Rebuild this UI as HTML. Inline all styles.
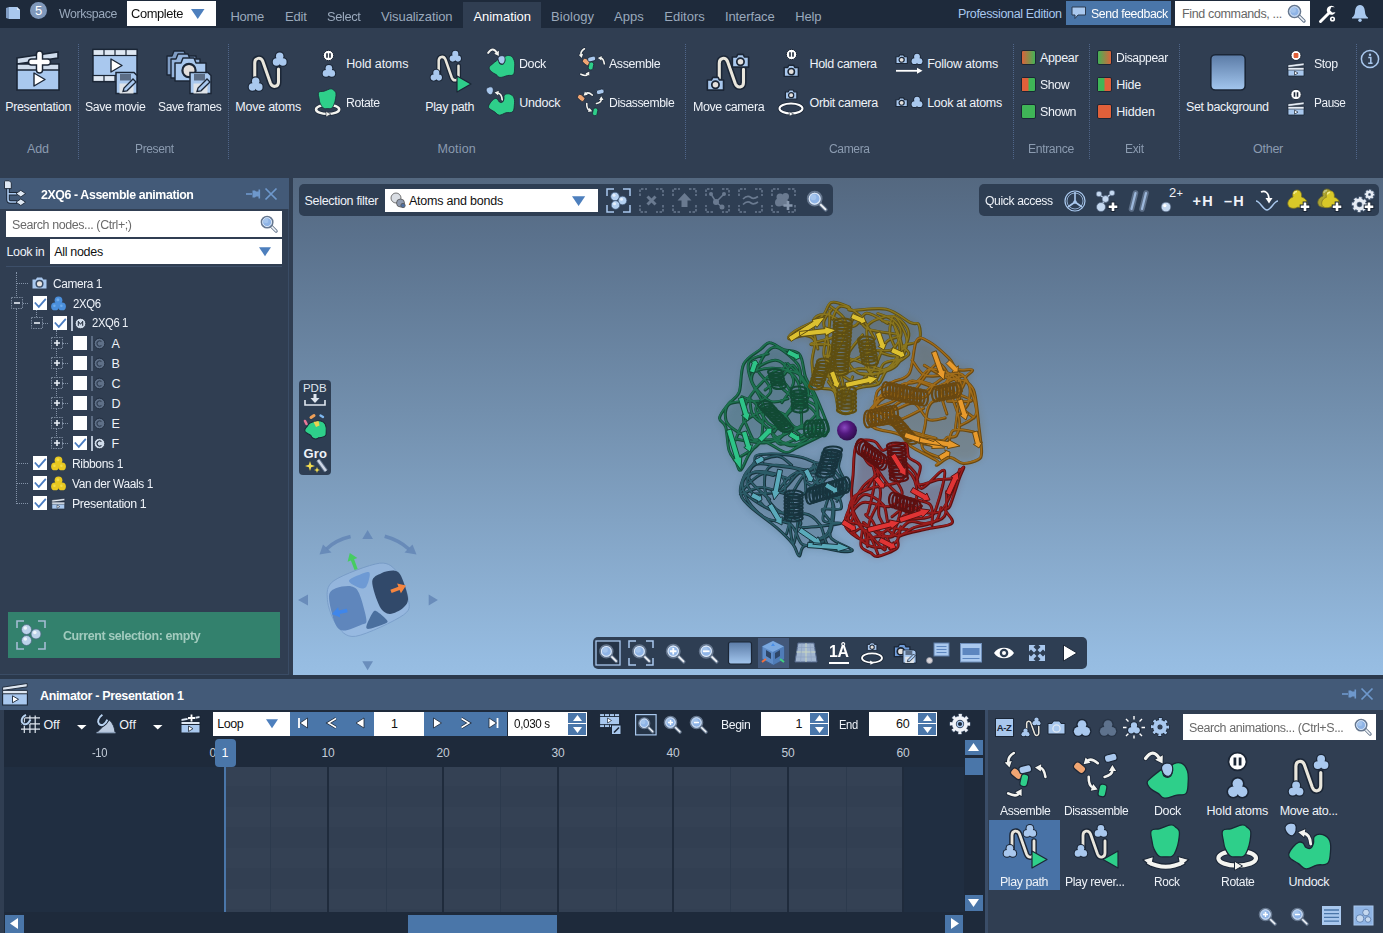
<!DOCTYPE html>
<html lang="en">
<head>
<meta charset="utf-8">
<title>2XQ6 - Assemble animation</title>
<style>
*{box-sizing:border-box;margin:0;padding:0}
html,body{width:1383px;height:933px;overflow:hidden;background:#303e52}
body{position:relative;font-family:"Liberation Sans",sans-serif;font-size:12.5px;color:#eef2f8}
.a{position:absolute}
.t{position:absolute;white-space:nowrap;line-height:16px;height:16px}
svg{position:absolute;overflow:visible}
</style>
</head>
<body>
<svg width="0" height="0" style="position:absolute"><defs>
 <linearGradient id="bgg" x1="0" y1="0" x2="0" y2="1"><stop offset="0" stop-color="#5b7ba6"/><stop offset="1" stop-color="#a3c6ee"/></linearGradient>
 <linearGradient id="og" x1="0" y1="0" x2="1" y2="0"><stop offset="0" stop-color="#e0603a"/><stop offset="1" stop-color="#3fb557"/></linearGradient>
 <linearGradient id="go" x1="0" y1="0" x2="1" y2="0"><stop offset="0" stop-color="#3fb557"/><stop offset="1" stop-color="#e0603a"/></linearGradient>
 <g id="mag"><path d="M11.5 11.5 L17 17" stroke="#66778e" stroke-width="3.4" stroke-linecap="round"/><path d="M12 12 L16.8 16.8" stroke="#f2f5f9" stroke-width="1.6" stroke-linecap="round"/><circle cx="7.5" cy="7.5" r="6" fill="#8fb4e6" stroke="#66778e" stroke-width="1.6"/><circle cx="7.5" cy="7.5" r="4.7" fill="none" stroke="#dfe9f6" stroke-width="1"/><circle cx="6.3" cy="6.2" r="2.6" fill="#a9c8ee" opacity=".8"/></g>
 <path id="tri" d="M0 0 H13.5 L6.75 10 Z" fill="#4d7fbd"/>
 <!-- trefoil atoms, 12x12 -->
 <g id="at"><g fill="#1b2636"><circle cx="6" cy="3.700" r="3.800"/><circle cx="3.500" cy="8.200" r="3.800"/><circle cx="8.500" cy="8.200" r="3.800"/></g><g fill="#a9c8ee"><circle cx="6" cy="3.700" r="2.900"/><circle cx="3.500" cy="8.200" r="2.900"/><circle cx="8.500" cy="8.200" r="2.900"/><circle cx="6" cy="6.800" r="2.600"/></g></g>
 <!-- camera 14x11 -->
 <g id="cam"><path d="M1 3 H4 L5 1 H9 L10 3 H13 V10.5 H1 Z" fill="#a9c8ee" stroke="#1b2636" stroke-width="1.2" stroke-linejoin="round"/><circle cx="7" cy="6.5" r="2.7" fill="#e4e0dc" stroke="#1b2636" stroke-width="1.3"/></g>
 <!-- N path 24x30 -->
 <g id="np" fill="none" stroke-linecap="round" stroke-linejoin="round"><path d="M3 20 V6.500 C3 1.500 8.500 0.500 10.500 5 L17.500 25 C19.500 30 25 28.500 25 24 V12" stroke="#1b2636" stroke-width="5.600"/><path d="M3 20 V6.500 C3 1.500 8.500 0.500 10.500 5 L17.500 25 C19.500 30 25 28.500 25 24 V12" stroke="#e9e6dc" stroke-width="2.800"/></g>
 <!-- pause badge 11x11 -->
 <g id="pz"><circle cx="5.5" cy="5.5" r="5.2" fill="#fff" stroke="#1b2636" stroke-width="1"/><path d="M4 3.2 V7.8 M7 3.2 V7.8" stroke="#1b2636" stroke-width="1.6"/></g>
 <!-- green blob (dock) 27x23 -->
 <path id="blob" d="M4 7 C6 3 10 2 13 2 C17 0 23 1 25 5 C27 9 26 13 26 17 C25 21 21 20 17 21 C13 24 9 21 8 18 C5 16 0 15 1 12 C1 9 3 9 4 7 Z" fill="#2ecf8a" stroke="#1b2636" stroke-width="1.2"/>
 <!-- rotate body 20x22 -->
 <path id="tooth" d="M3 4 C6 3 8 2 10 1 C12 0 14 2 17 3 C19 4 18 8 17.5 12 C17 17 15 20 11 21 C6 21 4 17 3.5 13 C3 9 1 5 3 4 Z" fill="#2ecf8a" stroke="#1b2636" stroke-width="1.2"/>
 <!-- small clapper 18x14 -->
 <g id="clap"><path d="M1 5 H17 V13.5 H1 Z" fill="#a9c8ee" stroke="#1b2636" stroke-width=".8"/><path d="M1 2.400 L17 0.400 V3 L1 5 Z" fill="#e6edf6" stroke="#1b2636" stroke-width=".6"/><path d="M1 5 H17 V7.600 H1 Z" fill="#e6edf6" stroke="#1b2636" stroke-width=".6"/><path d="M7.500 8.600 V12.600 L11 10.600 Z" fill="#fff" stroke="#1b2636" stroke-width=".7"/></g>
 <!-- curved arrow small (white) 10x8 pointing right-down -->
 <g id="carr"><path d="M1 6 C2 2 6 1 9 4" fill="none" stroke="#1b2636" stroke-width="3"/><path d="M1 6 C2 2 6 1 9 4" fill="none" stroke="#fff" stroke-width="1.5"/><path d="M10.5 6.5 L6.6 5.6 L9.8 2.2 Z" fill="#fff" stroke="#1b2636" stroke-width=".6"/></g>
</defs></svg>
<svg width="0" height="0" style="position:absolute"><defs><g id="i_asm"><path d="M1013.8 753.0Q1007.2 757.0 1008.5 762.8" fill="none" stroke="#1b2636" stroke-width="4.2" stroke-linecap="round"/><path d="M1009.5 767.5L1004.7 762.4L1011.7 760.9Z" fill="#1b2636" stroke="#1b2636" stroke-width="1.6" stroke-linejoin="round"/><path d="M1013.8 753.0Q1007.2 757.0 1008.5 762.8" fill="none" stroke="#f4f4f0" stroke-width="2.6" stroke-linecap="round"/><path d="M1009.5 767.5L1004.7 762.4L1011.7 760.9Z" fill="#f4f4f0"/><path d="M1045.4 776.9Q1044.0 768.0 1039.8 767.8" fill="none" stroke="#1b2636" stroke-width="4.2" stroke-linecap="round"/><path d="M1035.0 767.6L1041.2 764.3L1040.8 771.5Z" fill="#1b2636" stroke="#1b2636" stroke-width="1.6" stroke-linejoin="round"/><path d="M1045.4 776.9Q1044.0 768.0 1039.8 767.8" fill="none" stroke="#f4f4f0" stroke-width="2.6" stroke-linecap="round"/><path d="M1035.0 767.6L1041.2 764.3L1040.8 771.5Z" fill="#f4f4f0"/><path d="M1008.2 793.4Q1016.5 797.5 1019.1 793.1" fill="none" stroke="#1b2636" stroke-width="4.2" stroke-linecap="round"/><path d="M1021.6 789.0L1021.6 796.0L1015.4 792.3Z" fill="#1b2636" stroke="#1b2636" stroke-width="1.6" stroke-linejoin="round"/><path d="M1008.2 793.4Q1016.5 797.5 1019.1 793.1" fill="none" stroke="#f4f4f0" stroke-width="2.6" stroke-linecap="round"/><path d="M1021.6 789.0L1021.6 796.0L1015.4 792.3Z" fill="#f4f4f0"/><rect x="1010.4" y="769.8" width="12.5" height="8" rx="3.3" transform="rotate(40 1016.6 773.8)" fill="#f0a572" stroke="#1b2636" stroke-width="1.200"/><rect x="1019.0" y="765.5" width="12.5" height="7.5" rx="3.1" transform="rotate(-15 1025.2 769.3)" fill="#a9c8ee" stroke="#1b2636" stroke-width="1.200"/><rect x="1020.5" y="774.1" width="7.5" height="12.5" rx="3.1" transform="rotate(12 1024.2 780.4)" fill="#2ecf8a" stroke="#1b2636" stroke-width="1.200"/></g><g id="i_dasm"><path d="M1097.8 763.2Q1091.0 757.5 1087.2 761.0" fill="none" stroke="#1b2636" stroke-width="4.2" stroke-linecap="round"/><path d="M1083.6 764.2L1085.6 757.5L1090.5 762.8Z" fill="#1b2636" stroke="#1b2636" stroke-width="1.6" stroke-linejoin="round"/><path d="M1097.8 763.2Q1091.0 757.5 1087.2 761.0" fill="none" stroke="#f4f4f0" stroke-width="2.6" stroke-linecap="round"/><path d="M1083.6 764.2L1085.6 757.5L1090.5 762.8Z" fill="#f4f4f0"/><path d="M1104.6 776.9Q1112.5 775.0 1112.4 769.8" fill="none" stroke="#1b2636" stroke-width="4.2" stroke-linecap="round"/><path d="M1112.4 765.0L1116.1 771.0L1108.9 771.0Z" fill="#1b2636" stroke="#1b2636" stroke-width="1.6" stroke-linejoin="round"/><path d="M1104.6 776.9Q1112.5 775.0 1112.4 769.8" fill="none" stroke="#f4f4f0" stroke-width="2.6" stroke-linecap="round"/><path d="M1112.4 765.0L1116.1 771.0L1108.9 771.0Z" fill="#f4f4f0"/><path d="M1088.7 776.9Q1088.5 786.0 1093.1 787.7" fill="none" stroke="#1b2636" stroke-width="4.2" stroke-linecap="round"/><path d="M1097.6 789.4L1090.7 790.7L1093.2 783.9Z" fill="#1b2636" stroke="#1b2636" stroke-width="1.6" stroke-linejoin="round"/><path d="M1088.7 776.9Q1088.5 786.0 1093.1 787.7" fill="none" stroke="#f4f4f0" stroke-width="2.6" stroke-linecap="round"/><path d="M1097.6 789.4L1090.7 790.7L1093.2 783.9Z" fill="#f4f4f0"/><rect x="1073.3" y="763.8" width="12.5" height="8" rx="3.3" transform="rotate(40 1079.6 767.8)" fill="#f0a572" stroke="#1b2636" stroke-width="1.200"/><rect x="1104.5" y="754.1" width="12.5" height="7.5" rx="3.1" transform="rotate(-15 1110.7 757.9)" fill="#a9c8ee" stroke="#1b2636" stroke-width="1.200"/><rect x="1098.7" y="784.2" width="7.5" height="12.5" rx="3.1" transform="rotate(12 1102.4 790.5)" fill="#2ecf8a" stroke="#1b2636" stroke-width="1.200"/></g><g id="i_dock"><path d="M1147.2 782.2C1147.6 779.6 1150.7 778.1 1153.0 776.0C1155.3 773.9 1156.7 772.8 1158.5 771.6C1160.3 770.4 1160.9 769.1 1162.0 770.0C1163.1 770.9 1162.4 774.7 1164.0 776.0C1165.6 777.3 1168.3 777.5 1170.0 776.5C1171.7 775.5 1172.1 773.4 1172.5 771.0C1172.9 768.6 1170.4 766.3 1172.2 764.7C1174.0 763.1 1178.3 762.0 1181.3 763.2C1184.3 764.4 1186.0 766.8 1187.4 770.8C1188.8 774.8 1188.4 778.4 1188.1 783.0C1187.8 787.6 1188.2 791.2 1185.9 793.6C1183.6 796.0 1181.1 794.2 1176.8 795.1C1172.5 796.0 1168.3 798.4 1164.6 798.1C1160.9 797.8 1161.2 795.4 1158.5 793.6C1155.8 791.8 1153.3 791.3 1151.0 789.0C1148.7 786.7 1146.8 784.8 1147.2 782.2Z" fill="#2ecf8a" stroke="#1b2636" stroke-width="1.3" stroke-linejoin="round"/><path d="M1162.0 766.0C1162.8 764.6 1164.1 763.5 1166.0 763.2C1167.9 762.9 1170.2 762.9 1171.5 764.5C1172.8 766.1 1172.9 768.7 1172.5 771.0C1172.1 773.3 1171.1 775.2 1169.5 776.0C1167.9 776.8 1166.0 776.2 1164.5 775.0C1163.0 773.8 1162.3 771.8 1161.8 770.0C1161.3 768.2 1161.2 767.4 1162.0 766.0Z" fill="#a9c8ee" stroke="#1b2636" stroke-width="1.2" stroke-linejoin="round"/><path d="M1145.5 758.5Q1153.0 747.5 1159.7 758.8" fill="none" stroke="#1b2636" stroke-width="4.800000000000001" stroke-linecap="round"/><path d="M1162.6 763.6L1155.2 759.8L1162.8 755.3Z" fill="#1b2636" stroke="#1b2636" stroke-width="1.6" stroke-linejoin="round"/><path d="M1145.5 758.5Q1153.0 747.5 1159.7 758.8" fill="none" stroke="#f4f4f0" stroke-width="3.2" stroke-linecap="round"/><path d="M1162.6 763.6L1155.2 759.8L1162.8 755.3Z" fill="#f4f4f0"/></g><g id="i_undock"><path d="M1288.7 854.4C1289.1 852.0 1291.0 849.4 1293.0 847.0C1295.0 844.6 1296.5 843.1 1298.5 842.3C1300.5 841.5 1301.5 842.0 1303.0 843.0C1304.5 844.0 1304.5 846.5 1306.1 847.5C1307.7 848.5 1309.5 848.9 1311.0 848.0C1312.5 847.1 1312.8 845.4 1313.5 843.0C1314.2 840.6 1312.6 837.9 1314.5 836.2C1316.4 834.5 1319.8 833.8 1322.8 834.7C1325.8 835.6 1328.2 837.2 1329.7 840.8C1331.2 844.4 1330.9 848.3 1330.4 852.9C1329.9 857.5 1330.1 861.2 1327.4 863.6C1324.7 866.0 1321.1 864.0 1316.8 865.1C1312.5 866.2 1309.8 869.2 1306.1 868.9C1302.4 868.6 1301.5 865.6 1298.5 863.6C1295.5 861.6 1293.0 860.8 1291.0 859.0C1289.0 857.2 1288.3 856.8 1288.7 854.4Z" fill="#2ecf8a" stroke="#1b2636" stroke-width="1.3" stroke-linejoin="round"/><path d="M1285.5 826.0C1286.4 824.6 1288.0 823.5 1290.0 823.2C1292.0 822.9 1294.1 822.9 1295.3 824.5C1296.5 826.1 1296.5 828.8 1296.0 831.0C1295.5 833.2 1294.5 834.8 1293.0 835.5C1291.5 836.2 1290.0 835.6 1288.5 834.5C1287.0 833.4 1285.9 831.7 1285.3 830.0C1284.7 828.3 1284.6 827.4 1285.5 826.0Z" fill="#a9c8ee" stroke="#1b2636" stroke-width="1.2" stroke-linejoin="round"/><path d="M1310.7 844.0Q1310.0 834.0 1303.4 833.0" fill="none" stroke="#1b2636" stroke-width="4.4" stroke-linecap="round"/><path d="M1298.3 832.2L1305.3 829.2L1304.1 837.1Z" fill="#1b2636" stroke="#1b2636" stroke-width="1.6" stroke-linejoin="round"/><path d="M1310.7 844.0Q1310.0 834.0 1303.4 833.0" fill="none" stroke="#f4f4f0" stroke-width="2.8" stroke-linecap="round"/><path d="M1298.3 832.2L1305.3 829.2L1304.1 837.1Z" fill="#f4f4f0"/></g><g id="i_rock"><path d="M1147 861.5 Q1165.7 871.5 1184.5 861.5" fill="none" stroke="#1b2636" stroke-width="6"/><path d="M1142.8 859.8 L1153.5 856.5 L1151.5 867 Z M1188.800 859.5 L1178 856.5 L1180 867 Z" fill="#f4f4f0" stroke="#1b2636" stroke-width="1.200" stroke-linejoin="round"/><path d="M1148 862 Q1165.700 871.5 1183.5 862" fill="none" stroke="#f4f4f0" stroke-width="4.200"/><path d="M1151.3 830.6C1152.9 828.1 1156.1 829.8 1160.0 828.6C1163.9 827.4 1167.8 825.0 1171.0 824.8C1174.2 824.6 1174.3 826.2 1176.0 827.5C1177.7 828.8 1178.8 828.8 1179.3 831.5C1179.8 834.2 1179.2 837.5 1178.6 841.0C1178.0 844.5 1177.7 846.0 1176.5 849.0C1175.3 852.0 1174.7 854.4 1172.5 856.0C1170.3 857.6 1168.4 856.8 1165.7 856.8C1163.0 856.8 1161.1 857.6 1158.8 856.0C1156.5 854.4 1155.4 852.0 1154.0 849.0C1152.6 846.0 1152.5 844.7 1152.0 841.0C1151.5 837.3 1149.7 833.1 1151.3 830.6Z" fill="#2ecf8a" stroke="#1b2636" stroke-width="1.3" stroke-linejoin="round"/></g><g id="i_rot"><ellipse cx="1237.200" cy="858.200" rx="18.800" ry="7.400" fill="none" stroke="#1b2636" stroke-width="6.200"/><ellipse cx="1237.200" cy="858.200" rx="18.800" ry="7.400" fill="none" stroke="#f4f4f0" stroke-width="4.200"/><path d="M1234.500 861.200 L1242.500 866 L1234.500 870.500 Z" fill="#f4f4f0" stroke="#1b2636" stroke-width="1"/><path d="M1222.7 830.6C1224.3 828.1 1227.5 829.8 1231.4 828.6C1235.3 827.4 1239.2 825.0 1242.4 824.8C1245.6 824.6 1245.7 826.2 1247.4 827.5C1249.1 828.8 1250.2 828.8 1250.7 831.5C1251.2 834.2 1250.6 837.5 1250.0 841.0C1249.4 844.5 1249.1 846.0 1247.9 849.0C1246.7 852.0 1246.1 854.4 1243.9 856.0C1241.7 857.6 1239.8 856.8 1237.1 856.8C1234.4 856.8 1232.5 857.6 1230.2 856.0C1227.9 854.4 1226.8 852.0 1225.4 849.0C1224.0 846.0 1223.9 844.7 1223.4 841.0C1222.9 837.3 1221.1 833.1 1222.7 830.6Z" fill="#2ecf8a" stroke="#1b2636" stroke-width="1.3" stroke-linejoin="round"/></g></defs></svg>
<!-- TOP BAR -->
<div class="a" style="left:0px;top:0px;width:1383px;height:28px;background:#1e2a3b"></div>
<svg style="left:5px;top:6px" width="16" height="14" viewBox="0 0 16 14"><path d="M1 2 L4 1 L4 13 L1 12 Z" fill="#7f9cc4"/><path d="M4 1 L12 1 L15 4 L15 13 L4 13 Z" fill="#a9c8ee"/><path d="M12 1 L12 4 L15 4 Z" fill="#dbe8f8"/></svg>
<div class="a" style="left:30px;top:2px;width:17px;height:17px;background:#7f98bb;border-radius:50%"></div>
<div class="t" style="left:30px;width:17px;text-align:center;top:2.5px;font-size:13px;color:#fff">5</div>
<div class="t" style="left:59px;letter-spacing:-0.40px;transform:scaleX(0.948);transform-origin:0 0;top:5.8px;font-size:13px;color:#9aa9bc">Workspace</div>
<div class="a" style="left:127px;top:1px;width:89px;height:25px;background:#fff"></div>
<div class="t" style="left:131px;letter-spacing:-0.40px;transform:scaleX(0.992);transform-origin:0 0;top:5.7px;font-size:13px;color:#111">Complete</div>
<svg style="left:191px;top:9px" width="14" height="10" viewBox="0 0 14 10"><use href="#tri"/></svg>
<div class="t" style="left:230.5px;letter-spacing:-0.29px;top:8.5px;font-size:13px;color:#9aa9bc">Home</div>
<div class="t" style="left:285px;letter-spacing:-0.20px;top:8.5px;font-size:13px;color:#9aa9bc">Edit</div>
<div class="t" style="left:327px;letter-spacing:-0.40px;transform:scaleX(0.990);transform-origin:0 0;top:8.5px;font-size:13px;color:#9aa9bc">Select</div>
<div class="t" style="left:381px;letter-spacing:-0.10px;top:8.5px;font-size:13px;color:#9aa9bc">Visualization</div>
<div class="a" style="left:463px;top:2px;width:78px;height:26px;background:#303e52"></div>
<div class="t" style="left:473.4px;letter-spacing:-0.02px;top:8.5px;font-size:13px;color:#fff">Animation</div>
<div class="t" style="left:551px;letter-spacing:0.05px;top:8.5px;font-size:13px;color:#9aa9bc">Biology</div>
<div class="t" style="left:614px;top:8.5px;font-size:13px;color:#9aa9bc">Apps</div>
<div class="t" style="left:664.3px;top:8.5px;font-size:13px;color:#9aa9bc">Editors</div>
<div class="t" style="left:725px;letter-spacing:-0.12px;top:8.5px;font-size:13px;color:#9aa9bc">Interface</div>
<div class="t" style="left:795.3px;letter-spacing:-0.16px;top:8.5px;font-size:13px;color:#9aa9bc">Help</div>
<div class="t" style="left:958px;letter-spacing:-0.34px;top:5.8px;color:#a9c8ee">Professional Edition</div>
<div class="a" style="left:1066px;top:1px;width:105px;height:24px;background:#4a76a9"></div>
<svg style="left:1071px;top:6px" width="16" height="14" viewBox="0 0 16 14"><path d="M1 1 H14.5 V9 H7 L4 12.5 V9 H1 Z" fill="#a9c8ee" stroke="#2b3b50" stroke-width="1"/></svg>
<div class="t" style="left:1090.5px;letter-spacing:-0.40px;transform:scaleX(0.983);transform-origin:0 0;top:5.8px;color:#fff">Send feedback</div>
<div class="a" style="left:1175px;top:1px;width:135px;height:25px;background:#fff"></div>
<div class="t" style="left:1182px;letter-spacing:-0.35px;top:5.8px;color:#666">Find commands, ...</div>
<svg style="left:1287px;top:4px" width="20" height="20" viewBox="0 0 20 20"><use href="#mag"/></svg>
<svg style="left:1318px;top:4px" width="20" height="20" viewBox="0 0 20 20"><path d="M2.5 17.5 L10.5 9.5" stroke="#fff" stroke-width="3" stroke-linecap="round"/><path d="M16.8 3.2 A4.6 4.6 0 1 0 17.5 8.2 L14.2 8.6 L12 6.2 L13.4 3 Z" fill="#fff"/><circle cx="14.5" cy="15" r="2.6" fill="#fff"/><circle cx="14.5" cy="15" r="1" fill="#1e2a3b"/></svg>
<svg style="left:1351px;top:4px" width="18" height="19" viewBox="0 0 18 19"><path d="M9 1 C5 1 4.2 5 4 8 C3.8 11 2.5 12.5 1 13.5 V14.5 H17 V13.5 C15.5 12.5 14.2 11 14 8 C13.8 5 13 1 9 1 Z" fill="#a9c8ee"/><circle cx="9" cy="16.3" r="1.7" fill="#a9c8ee"/></svg>
<!-- RIBBON -->
<div class="a" style="left:0px;top:28px;width:1383px;height:150px;background:#303e52"></div>
<div class="a" style="left:78px;top:44px;width:0;height:115px;border-left:1px dotted #50668a"></div>
<div class="a" style="left:228px;top:44px;width:0;height:115px;border-left:1px dotted #50668a"></div>
<div class="a" style="left:685px;top:44px;width:0;height:115px;border-left:1px dotted #50668a"></div>
<div class="a" style="left:1013px;top:44px;width:0;height:115px;border-left:1px dotted #50668a"></div>
<div class="a" style="left:1089px;top:44px;width:0;height:115px;border-left:1px dotted #50668a"></div>
<div class="a" style="left:1179px;top:44px;width:0;height:115px;border-left:1px dotted #50668a"></div>
<div class="a" style="left:1356px;top:44px;width:0;height:115px;border-left:1px dotted #50668a"></div>
<svg style="left:15px;top:50px" width="46" height="42" viewBox="0 0 46 42"><path d="M2 19 H44 V40 H2 Z" fill="#a9c8ee" stroke="#1b2636" stroke-width="1.6"/>
<path d="M2 8 L43 2 V8 L2 14 Z" fill="#cfdcec" stroke="#1b2636" stroke-width="1.6"/>
<path d="M2 14 H44 V20 H2 Z" fill="#cfdcec" stroke="#1b2636" stroke-width="1.6"/>
<path d="M19 23 V36 L30 29.5 Z" fill="#fff" stroke="#1b2636" stroke-width="1.4" stroke-linejoin="round"/>
<path d="M24.5 4 V20 M16.500 12 H32.500" stroke="#1b2636" stroke-width="7.5" stroke-linecap="round"/>
<path d="M24.5 4 V20 M16.500 12 H32.500" stroke="#fff" stroke-width="4.6" stroke-linecap="round"/></svg>
<div class="t" style="left:5.2px;letter-spacing:-0.35px;top:99px;color:#eef2f8">Presentation</div>
<div class="t" style="left:26.9px;letter-spacing:-0.05px;top:140.6px;color:#8b9bb0">Add</div>
<svg style="left:92px;top:48px" width="47" height="46" viewBox="0 0 47 46"><rect x="1" y="1.5" width="44" height="32" fill="#a9c8ee" stroke="#1b2636" stroke-width="1.5"/>
<rect x="1" y="1.5" width="44" height="6" fill="#dfe8f3" stroke="#1b2636" stroke-width="1.2"/><rect x="1" y="27.5" width="44" height="6" fill="#dfe8f3" stroke="#1b2636" stroke-width="1.2"/>
<path d="M12 1.5 V7.5 M23 1.5 V7.5 M34 1.5 V7.5 M12 27.5 V33.5 M23 27.5 V33.5" stroke="#1b2636" stroke-width="1.2"/>
<path d="M19 11 V24 L30 17.5 Z" fill="#fff" stroke="#1b2636" stroke-width="1.4" stroke-linejoin="round"/>
<g transform="translate(24,24.5)"><g id="flop"><path d="M0 0 H18 L21 3 V21 H0 Z" fill="#a9c8ee" stroke="#1b2636" stroke-width="1.5"/><rect x="4" y="1.5" width="11" height="6.5" fill="#5c6d85"/><rect x="3.5" y="11" width="14" height="10" fill="#dfe3e8"/><path d="M7 19 L8 15.5 L17 6.5 L20 9.5 L11 18.3 Z" fill="#a9c8ee" stroke="#1b2636" stroke-width="1.3"/></g></g></svg>
<div class="t" style="left:85px;letter-spacing:-0.40px;transform:scaleX(0.985);transform-origin:0 0;top:99px;color:#eef2f8">Save movie</div>
<svg style="left:166px;top:48px" width="47" height="46" viewBox="0 0 47 46"><g fill="#7f9cc4" stroke="#1b2636" stroke-width="1.4" stroke-linejoin="round"><path d="M1 8 H6 L8 3 H18 L20 8 H30 V27 H1 Z"/><path d="M5 11 H10 L12 6 H22 L24 11 H34 V30 H5 Z" fill="#94b2da"/></g>
<path d="M9 15 H15 L17 10 H28 L30 15 H40 V33 H9 Z" fill="#a9c8ee" stroke="#1b2636" stroke-width="1.5" stroke-linejoin="round"/>
<circle cx="23" cy="22.5" r="6.6" fill="#e4dfdc" stroke="#1b2636" stroke-width="2.2"/>
<g transform="translate(24,24.5)"><use href="#flop"/></g></svg>
<div class="t" style="left:158px;letter-spacing:-0.40px;transform:scaleX(0.963);transform-origin:0 0;top:99px;color:#eef2f8">Save frames</div>
<div class="t" style="left:134.5px;letter-spacing:-0.40px;transform:scaleX(0.961);transform-origin:0 0;top:140.6px;color:#8b9bb0">Present</div>
<svg style="left:246px;top:50px" width="44" height="42" viewBox="0 0 44 42"><g transform="translate(5.500,6) scale(1.08)"><use href="#np"/></g><g transform="translate(26,1.500) scale(1.28)"><use href="#at"/></g><g transform="translate(2,26.500) scale(1.28)"><use href="#at"/></g></svg>
<div class="t" style="left:235.3px;letter-spacing:-0.24px;top:99.4px;color:#eef2f8">Move atoms</div>
<svg style="left:323px;top:49.5px" width="11" height="11" viewBox="0 0 11 11"><use href="#pz"/></svg>
<svg style="left:321.5px;top:63.5px" width="14" height="14" viewBox="0 0 14 14"><g transform="scale(1.15)"><use href="#at"/></g></svg>
<div class="t" style="left:346.2px;letter-spacing:-0.11px;top:56px;color:#eef2f8">Hold atoms</div>
<svg style="left:0;top:0" width="1383" height="933" viewBox="0 0 1383 933"><g transform="translate(314.90,88.60) scale(0.615) translate(-1216.5,-824.4)"><use href="#i_rot"/></g></svg>
<div class="t" style="left:346.2px;letter-spacing:-0.40px;transform:scaleX(0.982);transform-origin:0 0;top:95px;color:#eef2f8">Rotate</div>
<svg style="left:430px;top:50px" width="42" height="43" viewBox="0 0 42 43"><g transform="translate(6,5) scale(.9)"><use href="#np"/></g><g transform="translate(19,0) scale(1.05)"><use href="#at"/></g><g transform="translate(0,19) scale(1.05)"><use href="#at"/></g><path d="M27 26 V42 L41 34 Z" fill="#2ecf8a" stroke="#1b2636" stroke-width="1.2" stroke-linejoin="round"/></svg>
<div class="t" style="left:425.2px;letter-spacing:-0.37px;top:99.4px;color:#eef2f8">Play path</div>
<div class="t" style="left:437.4px;letter-spacing:0.18px;top:140.7px;color:#8b9bb0">Motion</div>
<svg style="left:0;top:0" width="1383" height="933" viewBox="0 0 1383 933"><g transform="translate(487.30,48.20) scale(0.62) translate(-1144.1,-751)"><use href="#i_dock"/></g></svg>
<div class="t" style="left:519.2px;letter-spacing:-0.40px;transform:scaleX(0.997);transform-origin:0 0;top:56px;color:#eef2f8">Dock</div>
<svg style="left:0;top:0" width="1383" height="933" viewBox="0 0 1383 933"><g transform="translate(486.00,86.70) scale(0.617) translate(-1284.5,-822.8)"><use href="#i_undock"/></g></svg>
<div class="t" style="left:519.2px;letter-spacing:-0.23px;top:95px;color:#eef2f8">Undock</div>
<svg style="left:0;top:0" width="1383" height="933" viewBox="0 0 1383 933"><g transform="translate(579.00,48.00) scale(0.63) translate(-1005.2,-751.8)"><use href="#i_asm"/></g></svg>
<div class="t" style="left:609px;letter-spacing:-0.40px;transform:scaleX(0.991);transform-origin:0 0;top:56px;color:#eef2f8">Assemble</div>
<svg style="left:0;top:0" width="1383" height="933" viewBox="0 0 1383 933"><g transform="translate(577.00,88.60) scale(0.613) translate(-1072.8,-752.6)"><use href="#i_dasm"/></g></svg>
<div class="t" style="left:609px;letter-spacing:-0.40px;transform:scaleX(0.972);transform-origin:0 0;top:95px;color:#eef2f8">Disassemble</div>
<svg style="left:706px;top:52px" width="45" height="40" viewBox="0 0 45 40"><g transform="translate(10,4) scale(1.1)"><use href="#np"/></g><g transform="translate(25,1) scale(1.35)"><use href="#cam"/></g><g transform="translate(0,24) scale(1.35)"><use href="#cam"/></g></svg>
<div class="t" style="left:692.6px;letter-spacing:-0.40px;transform:scaleX(0.998);transform-origin:0 0;top:99px;color:#eef2f8">Move camera</div>
<svg style="left:785.7px;top:49px" width="11" height="11" viewBox="0 0 11 11"><use href="#pz"/></svg>
<svg style="left:783px;top:64px" width="17" height="13" viewBox="0 0 17 13"><g transform="scale(1.18)"><use href="#cam"/></g></svg>
<div class="t" style="left:809.6px;letter-spacing:-0.35px;top:56px;color:#eef2f8">Hold camera</div>
<svg style="left:778px;top:89px" width="27" height="27" viewBox="0 0 27 27"><g transform="translate(6.5,0) scale(.95)"><use href="#cam"/></g><ellipse cx="13" cy="19.5" rx="11.5" ry="5" fill="none" stroke="#1b2636" stroke-width="3.6"/><ellipse cx="13" cy="19.5" rx="11.5" ry="5" fill="none" stroke="#fff" stroke-width="2"/><path d="M11 22.500 L15.500 25 L11.500 27.200 Z" fill="#fff" stroke="#1b2636" stroke-width=".6"/></svg>
<div class="t" style="left:809.6px;letter-spacing:-0.34px;top:95px;color:#eef2f8">Orbit camera</div>
<svg style="left:895px;top:54px" width="28" height="20" viewBox="0 0 28 20"><g transform="scale(.95,.9)"><use href="#cam"/></g><g transform="translate(16,-1) scale(1)"><use href="#at"/></g><path d="M1 16.800 H24" stroke="#fff" stroke-width="1.8"/><path d="M22 13.800 L27.500 16.800 L22 19.800 Z" fill="#fff"/></svg>
<div class="t" style="left:927.2px;letter-spacing:-0.24px;top:56px;color:#eef2f8">Follow atoms</div>
<svg style="left:895px;top:97px" width="28" height="12" viewBox="0 0 28 12"><g transform="scale(.95,.9)"><use href="#cam"/></g><g transform="translate(16,-1)"><use href="#at"/></g></svg>
<div class="t" style="left:927.2px;letter-spacing:-0.29px;top:95px;color:#eef2f8">Look at atoms</div>
<div class="t" style="left:829.4px;letter-spacing:-0.40px;transform:scaleX(0.965);transform-origin:0 0;top:141px;color:#8b9bb0">Camera</div>
<svg style="left:1020.5px;top:50px" width="15" height="15" viewBox="0 0 15 15"><rect x=".5" y=".5" width="14" height="14" rx="1.5" fill="url(#og)" stroke="#1b2636" stroke-width="1"/></svg>
<div class="t" style="left:1040px;letter-spacing:-0.35px;top:50px;color:#eef2f8">Appear</div>
<svg style="left:1020.5px;top:77px" width="15" height="15" viewBox="0 0 15 15"><rect x=".5" y=".5" width="14" height="14" rx="1.5" fill="#3fb557" stroke="#1b2636" stroke-width="1"/><path d="M1 1 H7.5 V14 H1 Z" fill="#e0603a"/></svg>
<div class="t" style="left:1040px;letter-spacing:-0.40px;transform:scaleX(0.984);transform-origin:0 0;top:76.7px;color:#eef2f8">Show</div>
<svg style="left:1020.5px;top:104px" width="15" height="15" viewBox="0 0 15 15"><rect x=".5" y=".5" width="14" height="14" rx="1.5" fill="#3fb557" stroke="#1b2636" stroke-width="1"/></svg>
<div class="t" style="left:1040px;letter-spacing:-0.40px;transform:scaleX(0.994);transform-origin:0 0;top:104px;color:#eef2f8">Shown</div>
<div class="t" style="left:1028.2px;letter-spacing:-0.40px;transform:scaleX(0.978);transform-origin:0 0;top:140.6px;color:#8b9bb0">Entrance</div>
<svg style="left:1096.5px;top:50px" width="15" height="15" viewBox="0 0 15 15"><rect x=".5" y=".5" width="14" height="14" rx="1.5" fill="url(#go)" stroke="#1b2636" stroke-width="1"/></svg>
<div class="t" style="left:1116.2px;letter-spacing:-0.40px;transform:scaleX(0.971);transform-origin:0 0;top:50px;color:#eef2f8">Disappear</div>
<svg style="left:1096.5px;top:77px" width="15" height="15" viewBox="0 0 15 15"><rect x=".5" y=".5" width="14" height="14" rx="1.5" fill="#e0603a" stroke="#1b2636" stroke-width="1"/><path d="M1 1 H7.5 V14 H1 Z" fill="#3fb557"/></svg>
<div class="t" style="left:1116.2px;letter-spacing:-0.23px;top:76.7px;color:#eef2f8">Hide</div>
<svg style="left:1096.5px;top:104px" width="15" height="15" viewBox="0 0 15 15"><rect x=".5" y=".5" width="14" height="14" rx="1.5" fill="#e0603a" stroke="#1b2636" stroke-width="1"/></svg>
<div class="t" style="left:1116.2px;letter-spacing:-0.17px;top:104px;color:#eef2f8">Hidden</div>
<div class="t" style="left:1125.2px;letter-spacing:-0.40px;transform:scaleX(0.967);transform-origin:0 0;top:140.6px;color:#8b9bb0">Exit</div>
<svg style="left:1210px;top:53.5px" width="36" height="37" viewBox="0 0 36 37"><rect x=".8" y=".8" width="34.4" height="35.2" rx="4.5" fill="url(#bgg)" stroke="#1b2636" stroke-width="1.6"/></svg>
<div class="t" style="left:1186px;letter-spacing:-0.35px;top:98.6px;color:#eef2f8">Set background</div>
<svg style="left:1287px;top:50px" width="18" height="27" viewBox="0 0 18 27"><circle cx="9" cy="5.500" r="5" fill="#fff" stroke="#1b2636" stroke-width="1"/><rect x="6.600" y="3.100" width="4.800" height="4.800" rx=".8" fill="#e0603a"/><g transform="translate(0,12.500)"><use href="#clap"/></g></svg>
<div class="t" style="left:1313.8px;letter-spacing:-0.40px;transform:scaleX(0.987);transform-origin:0 0;top:55.7px;color:#eef2f8">Stop</div>
<svg style="left:1287px;top:89px" width="18" height="27" viewBox="0 0 18 27"><g transform="translate(3.500,0)"><use href="#pz"/></g><g transform="translate(0,12.500)"><use href="#clap"/></g></svg>
<div class="t" style="left:1313.8px;letter-spacing:-0.40px;transform:scaleX(0.942);transform-origin:0 0;top:94.8px;color:#eef2f8">Pause</div>
<div class="t" style="left:1253px;letter-spacing:-0.25px;top:140.6px;color:#8b9bb0">Other</div>
<svg style="left:1360px;top:49px" width="20" height="20" viewBox="0 0 20 20"><circle cx="10" cy="10" r="8.600" fill="none" stroke="#a9c8ee" stroke-width="1.500"/><circle cx="10" cy="5.800" r="1.200" fill="#a9c8ee"/><path d="M8.300 8.600 H10.800 V14 M8.200 14.200 H12.600" stroke="#a9c8ee" stroke-width="1.500" fill="none"/></svg>
<!-- LEFT PANEL -->
<div class="a" style="left:0px;top:178px;width:289px;height:497px;background:#303e52;border-right:1px solid #3a4c65;border-bottom:1px solid #3a4c65"></div>
<div class="a" style="left:0px;top:178px;width:289px;height:31px;background:#435a78"></div>
<svg style="left:4px;top:180px" width="22" height="26" viewBox="0 0 22 26"><path d="M4 8 V19.500 Q4 22 6.500 22 H13 M4 13.800 H13" fill="none" stroke="#1b2636" stroke-width="3.400"/><path d="M4 8 V19.500 Q4 22 6.500 22 H13 M4 13.800 H13" fill="none" stroke="#a9c8ee" stroke-width="1.600"/><path d="M0.500 1.800 Q0.500 0.800 1.500 0.800 H5.300 L7.300 2.800 V8.600 H0.500 Z" fill="#dfe8f3" stroke="#1b2636" stroke-width=".9"/><path d="M12 13.600 L16.800 10.300 L21.600 13.600 L16.800 16.900 Z M12 22.200 L16.800 18.900 L21.600 22.200 L16.800 25.500 Z" fill="#dfe8f3" stroke="#1b2636" stroke-width=".9"/></svg>
<div class="t" style="left:40.5px;letter-spacing:-0.40px;transform:scaleX(0.989);transform-origin:0 0;top:186.8px;color:#fff;font-weight:bold">2XQ6 - Assemble animation</div>
<svg style="left:246px;top:188px" width="32" height="12" viewBox="0 0 32 12"><g id="pinx" stroke="#6e98cc" fill="none"><path d="M0 6 H6" stroke-width="1.6"/><path d="M6.500 2.500 H9 L10 3.500 H13.500 V8.500 H10 L9 9.500 H6.500 Z" fill="#6e98cc" stroke="none"/><path d="M13.300 1.500 V10.500" stroke-width="1.600"/><path d="M19.500 0.500 L30.500 11.500 M30.500 0.500 L19.500 11.500" stroke-width="1.700"/></g></svg>
<div class="a" style="left:6px;top:211px;width:276px;height:26px;background:#fff"></div>
<div class="t" style="left:12.2px;letter-spacing:-0.40px;transform:scaleX(0.997);transform-origin:0 0;top:217.1px;color:#6a6a6a">Search nodes... (Ctrl+;)</div>
<svg style="left:260px;top:215px" width="19" height="19" viewBox="0 0 20 20"><use href="#mag"/></svg>
<div class="t" style="left:6.4px;letter-spacing:-0.33px;top:243.8px;color:#eef2f8">Look in</div>
<div class="a" style="left:50px;top:239px;width:232px;height:25px;background:#fff"></div>
<div class="t" style="left:54.2px;letter-spacing:-0.31px;top:243.8px;color:#111">All nodes</div>
<svg style="left:258.5px;top:247px" width="12" height="9.5" viewBox="0 0 13.5 10"><use href="#tri"/></svg>
<div class="a" style="left:6px;top:266px;width:276px;height:1px;background:#3d4f69"></div>
<div class="a" style="left:16px;top:272px;width:0;height:232px;border-left:1px dotted #8493a8"></div>
<div class="a" style="left:16px;top:283px;width:12px;height:0;border-top:1px dotted #8493a8"></div>
<div class="a" style="left:16px;top:463px;width:12px;height:0;border-top:1px dotted #8493a8"></div>
<div class="a" style="left:16px;top:483px;width:12px;height:0;border-top:1px dotted #8493a8"></div>
<div class="a" style="left:16px;top:503px;width:12px;height:0;border-top:1px dotted #8493a8"></div>
<div class="a" style="left:22px;top:303px;width:6px;height:0;border-top:1px dotted #8493a8"></div>
<div class="a" style="left:36px;top:310px;width:0;height:13px;border-left:1px dotted #8493a8"></div>
<div class="a" style="left:42px;top:323px;width:6px;height:0;border-top:1px dotted #8493a8"></div>
<div class="a" style="left:56px;top:330px;width:0;height:114px;border-left:1px dotted #8493a8"></div>
<svg style="left:32px;top:277px" width="15" height="11.5" viewBox="0 0 15 11.5"><path d="M0.500 2.500 H3.800 L5 0.500 H10 L11.200 2.500 H14.500 V11.500 H0.500 Z" fill="#a9c8ee"/><circle cx="7.500" cy="6.800" r="3.300" fill="#e8e4e0" stroke="#3a4c65" stroke-width="1.500"/></svg>
<div class="t" style="left:53.3px;letter-spacing:-0.40px;transform:scaleX(0.950);transform-origin:0 0;top:275.8px;color:#eef2f8">Camera 1</div>
<svg style="left:10.5px;top:297px" width="12" height="12" viewBox="0 0 12 12"><rect x=".5" y=".5" width="11" height="11" fill="#303e52" stroke="#7a899d" stroke-width="1" stroke-dasharray="1.500 1"/><path d="M3 6 H9" stroke="#e8eef6" stroke-width="1.600"/></svg>
<svg style="left:33px;top:296px" width="14" height="14" viewBox="0 0 14 14"><rect width="14" height="14" fill="#fff"/><path d="M1.800 6.500 L5.800 10.800 L12.800 2.800" fill="none" stroke="#4a7cc0" stroke-width="1.800"/></svg>
<svg style="left:51px;top:296px" width="15" height="15" viewBox="0 0 12 12"><g id="atb"><g fill="#4a8fdc"><circle cx="6" cy="3.400" r="3.100"/><circle cx="3.200" cy="8.300" r="3.100"/><circle cx="8.800" cy="8.300" r="3.100"/><circle cx="6" cy="6.600" r="2.400"/></g><g fill="#7fb8f0" opacity=".7"><circle cx="5.500" cy="2.900" r="1.200"/><circle cx="2.700" cy="7.800" r="1"/><circle cx="8.300" cy="7.800" r="1"/></g></g></svg>
<div class="t" style="left:72.5px;letter-spacing:-0.40px;transform:scaleX(0.912);transform-origin:0 0;top:295.6px;color:#eef2f8">2XQ6</div>
<svg style="left:30.5px;top:317px" width="12" height="12" viewBox="0 0 12 12"><rect x=".5" y=".5" width="11" height="11" fill="#303e52" stroke="#7a899d" stroke-width="1" stroke-dasharray="1.500 1"/><path d="M3 6 H9" stroke="#e8eef6" stroke-width="1.600"/></svg>
<svg style="left:53px;top:316px" width="14" height="14" viewBox="0 0 14 14"><rect width="14" height="14" fill="#fff"/><path d="M1.800 6.500 L5.800 10.800 L12.800 2.800" fill="none" stroke="#4a7cc0" stroke-width="1.800"/></svg>
<div class="a" style="left:71px;top:316px;width:1.5px;height:15px;background:#b8c4d4"></div>
<svg style="left:74.5px;top:318px" width="11" height="11" viewBox="0 0 11 11"><circle cx="5.500" cy="5.500" r="5.300" fill="#cfdbea" stroke="#1b2636" stroke-width=".8"/><path d="M3.300 7.800 V3.300 L5.500 6.300 L7.700 3.300 V7.800" fill="none" stroke="#1b2636" stroke-width="1"/></svg>
<div class="t" style="left:92px;letter-spacing:-0.40px;transform:scaleX(0.900);transform-origin:0 0;top:315.2px;color:#eef2f8">2XQ6 1</div>
<svg style="left:50.5px;top:337.1px" width="12" height="12" viewBox="0 0 12 12"><rect x=".5" y=".5" width="11" height="11" fill="#303e52" stroke="#7a899d" stroke-width="1" stroke-dasharray="1.500 1"/><path d="M3 6 H9 M6 3 V9" stroke="#e8eef6" stroke-width="1.600"/></svg>
<div class="a" style="left:62px;top:343px;width:6px;height:0;border-top:1px dotted #8493a8"></div>
<svg style="left:73px;top:336.1px" width="14" height="14" viewBox="0 0 14 14"><rect width="14" height="14" fill="#fff"/></svg>
<div class="a" style="left:91px;top:336.1px;width:1.5px;height:15px;background:#5b6b82"></div>
<svg style="left:94px;top:338.1px" width="11" height="11" viewBox="0 0 11 11"><circle cx="5.500" cy="5.500" r="5.300" fill="#5f7088" stroke="#1b2636" stroke-width=".8"/><path d="M7.400 3.600 A2.600 2.600 0 1 0 7.400 7.400" fill="none" stroke="#303e52" stroke-width="1.100"/></svg>
<div class="t" style="left:111.5px;top:335.6px;color:#eef2f8">A</div>
<svg style="left:50.5px;top:357.1px" width="12" height="12" viewBox="0 0 12 12"><rect x=".5" y=".5" width="11" height="11" fill="#303e52" stroke="#7a899d" stroke-width="1" stroke-dasharray="1.500 1"/><path d="M3 6 H9 M6 3 V9" stroke="#e8eef6" stroke-width="1.600"/></svg>
<div class="a" style="left:62px;top:363px;width:6px;height:0;border-top:1px dotted #8493a8"></div>
<svg style="left:73px;top:356.1px" width="14" height="14" viewBox="0 0 14 14"><rect width="14" height="14" fill="#fff"/></svg>
<div class="a" style="left:91px;top:356.1px;width:1.5px;height:15px;background:#5b6b82"></div>
<svg style="left:94px;top:358.1px" width="11" height="11" viewBox="0 0 11 11"><circle cx="5.500" cy="5.500" r="5.300" fill="#5f7088" stroke="#1b2636" stroke-width=".8"/><path d="M7.400 3.600 A2.600 2.600 0 1 0 7.400 7.400" fill="none" stroke="#303e52" stroke-width="1.100"/></svg>
<div class="t" style="left:111.5px;top:355.6px;color:#eef2f8">B</div>
<svg style="left:50.5px;top:377.1px" width="12" height="12" viewBox="0 0 12 12"><rect x=".5" y=".5" width="11" height="11" fill="#303e52" stroke="#7a899d" stroke-width="1" stroke-dasharray="1.500 1"/><path d="M3 6 H9 M6 3 V9" stroke="#e8eef6" stroke-width="1.600"/></svg>
<div class="a" style="left:62px;top:383px;width:6px;height:0;border-top:1px dotted #8493a8"></div>
<svg style="left:73px;top:376.1px" width="14" height="14" viewBox="0 0 14 14"><rect width="14" height="14" fill="#fff"/></svg>
<div class="a" style="left:91px;top:376.1px;width:1.5px;height:15px;background:#5b6b82"></div>
<svg style="left:94px;top:378.1px" width="11" height="11" viewBox="0 0 11 11"><circle cx="5.500" cy="5.500" r="5.300" fill="#5f7088" stroke="#1b2636" stroke-width=".8"/><path d="M7.400 3.600 A2.600 2.600 0 1 0 7.400 7.400" fill="none" stroke="#303e52" stroke-width="1.100"/></svg>
<div class="t" style="left:111.5px;top:375.6px;color:#eef2f8">C</div>
<svg style="left:50.5px;top:397.1px" width="12" height="12" viewBox="0 0 12 12"><rect x=".5" y=".5" width="11" height="11" fill="#303e52" stroke="#7a899d" stroke-width="1" stroke-dasharray="1.500 1"/><path d="M3 6 H9 M6 3 V9" stroke="#e8eef6" stroke-width="1.600"/></svg>
<div class="a" style="left:62px;top:403px;width:6px;height:0;border-top:1px dotted #8493a8"></div>
<svg style="left:73px;top:396.1px" width="14" height="14" viewBox="0 0 14 14"><rect width="14" height="14" fill="#fff"/></svg>
<div class="a" style="left:91px;top:396.1px;width:1.5px;height:15px;background:#5b6b82"></div>
<svg style="left:94px;top:398.1px" width="11" height="11" viewBox="0 0 11 11"><circle cx="5.500" cy="5.500" r="5.300" fill="#5f7088" stroke="#1b2636" stroke-width=".8"/><path d="M7.400 3.600 A2.600 2.600 0 1 0 7.400 7.400" fill="none" stroke="#303e52" stroke-width="1.100"/></svg>
<div class="t" style="left:111.5px;top:395.6px;color:#eef2f8">D</div>
<svg style="left:50.5px;top:417.1px" width="12" height="12" viewBox="0 0 12 12"><rect x=".5" y=".5" width="11" height="11" fill="#303e52" stroke="#7a899d" stroke-width="1" stroke-dasharray="1.500 1"/><path d="M3 6 H9 M6 3 V9" stroke="#e8eef6" stroke-width="1.600"/></svg>
<div class="a" style="left:62px;top:423px;width:6px;height:0;border-top:1px dotted #8493a8"></div>
<svg style="left:73px;top:416.1px" width="14" height="14" viewBox="0 0 14 14"><rect width="14" height="14" fill="#fff"/></svg>
<div class="a" style="left:91px;top:416.1px;width:1.5px;height:15px;background:#5b6b82"></div>
<svg style="left:94px;top:418.1px" width="11" height="11" viewBox="0 0 11 11"><circle cx="5.500" cy="5.500" r="5.300" fill="#5f7088" stroke="#1b2636" stroke-width=".8"/><path d="M7.400 3.600 A2.600 2.600 0 1 0 7.400 7.400" fill="none" stroke="#303e52" stroke-width="1.100"/></svg>
<div class="t" style="left:111.5px;top:415.6px;color:#eef2f8">E</div>
<svg style="left:50.5px;top:437.1px" width="12" height="12" viewBox="0 0 12 12"><rect x=".5" y=".5" width="11" height="11" fill="#303e52" stroke="#7a899d" stroke-width="1" stroke-dasharray="1.500 1"/><path d="M3 6 H9 M6 3 V9" stroke="#e8eef6" stroke-width="1.600"/></svg>
<div class="a" style="left:62px;top:443px;width:6px;height:0;border-top:1px dotted #8493a8"></div>
<svg style="left:73px;top:436.1px" width="14" height="14" viewBox="0 0 14 14"><rect width="14" height="14" fill="#fff"/><path d="M1.800 6.500 L5.800 10.800 L12.800 2.800" fill="none" stroke="#4a7cc0" stroke-width="1.800"/></svg>
<div class="a" style="left:91px;top:436.1px;width:1.5px;height:15px;background:#b8c4d4"></div>
<svg style="left:94px;top:438.1px" width="11" height="11" viewBox="0 0 11 11"><circle cx="5.500" cy="5.500" r="5.300" fill="#cfdbea" stroke="#1b2636" stroke-width=".8"/><path d="M7.400 3.600 A2.600 2.600 0 1 0 7.400 7.400" fill="none" stroke="#1b2636" stroke-width="1.100"/></svg>
<div class="t" style="left:111.5px;top:435.6px;color:#eef2f8">F</div>
<svg style="left:33px;top:456px" width="14" height="14" viewBox="0 0 14 14"><rect width="14" height="14" fill="#fff"/><path d="M1.800 6.500 L5.800 10.800 L12.800 2.800" fill="none" stroke="#4a7cc0" stroke-width="1.800"/></svg>
<svg style="left:51px;top:456px" width="15" height="15" viewBox="0 0 12 12"><g id="aty"><g fill="#e8c820"><circle cx="6" cy="3.400" r="3.100"/><circle cx="3.200" cy="8.300" r="3.100"/><circle cx="8.800" cy="8.300" r="3.100"/><circle cx="6" cy="6.600" r="2.400"/></g><g fill="#f4e460" opacity=".7"><circle cx="5.500" cy="2.900" r="1.200"/><circle cx="2.700" cy="7.800" r="1"/><circle cx="8.300" cy="7.800" r="1"/></g></g></svg>
<div class="t" style="left:72px;letter-spacing:-0.40px;transform:scaleX(0.968);transform-origin:0 0;top:455.8px;color:#eef2f8">Ribbons 1</div>
<svg style="left:33px;top:476px" width="14" height="14" viewBox="0 0 14 14"><rect width="14" height="14" fill="#fff"/><path d="M1.800 6.500 L5.800 10.800 L12.800 2.800" fill="none" stroke="#4a7cc0" stroke-width="1.800"/></svg>
<svg style="left:51px;top:476px" width="15" height="15" viewBox="0 0 12 12"><use href="#aty"/></svg>
<div class="t" style="left:72px;letter-spacing:-0.40px;transform:scaleX(0.953);transform-origin:0 0;top:475.8px;color:#eef2f8">Van der Waals 1</div>
<svg style="left:33px;top:496px" width="14" height="14" viewBox="0 0 14 14"><rect width="14" height="14" fill="#fff"/><path d="M1.800 6.500 L5.800 10.800 L12.800 2.800" fill="none" stroke="#4a7cc0" stroke-width="1.800"/></svg>
<svg style="left:50.5px;top:497.5px" width="14.5" height="11.5" viewBox="0 0 18 14"><use href="#clap"/></svg>
<div class="t" style="left:72px;letter-spacing:-0.40px;transform:scaleX(0.991);transform-origin:0 0;top:495.8px;color:#eef2f8">Presentation 1</div>
<div class="a" style="left:8px;top:612px;width:272px;height:46px;background:#33816d"></div>
<svg style="left:16px;top:620px" width="30" height="30" viewBox="0 0 30 30"><path d="M1 8 V1 H8 M22 1 H29 V8 M29 22 V29 H22 M8 29 H1 V22" fill="none" stroke="#a4bcd4" stroke-width="1.600"/><g fill="#bcd2ea" stroke="#4a6a80" stroke-width=".8"><circle cx="10.500" cy="9.500" r="5"/><circle cx="20" cy="14" r="5"/><circle cx="10.500" cy="20.500" r="5"/></g><g fill="#eef4fb"><circle cx="9.300" cy="8" r="1.800"/><circle cx="18.800" cy="12.500" r="1.800"/><circle cx="9.300" cy="19" r="1.800"/></g></svg>
<div class="t" style="left:63.3px;letter-spacing:-0.40px;transform:scaleX(0.997);transform-origin:0 0;top:628.3px;color:#a2cbbe;font-weight:bold">Current selection: empty</div>
<!-- VIEWPORT -->
<div class="a" style="left:293px;top:178px;width:1090px;height:497px;background:linear-gradient(#546880 0%,#5a718c 11.5%,#728fad 46.7%,#96bce1 97%,#98bee3 100%)"></div>
<div class="a" style="left:299px;top:184px;width:534px;height:32px;background:#2e3e53;border-radius:5px"></div>
<div class="t" style="left:304.6px;letter-spacing:-0.31px;top:192.6px;color:#eef2f8">Selection filter</div>
<div class="a" style="left:385px;top:189px;width:212.5px;height:22.5px;background:#fff"></div>
<svg style="left:390px;top:192px" width="16" height="16" viewBox="0 0 16 16"><g stroke="#555" stroke-width=".8"><circle cx="6" cy="6" r="5" fill="#d9dde3"/><circle cx="10.500" cy="11" r="4" fill="#8f9bb0"/><circle cx="13" cy="13.500" r="2.200" fill="#4f6fa0"/></g></svg>
<div class="t" style="left:409px;letter-spacing:-0.22px;top:192.6px;color:#111">Atoms and bonds</div>
<svg style="left:572.3px;top:195.7px" width="13.2" height="10.2" viewBox="0 0 13.5 10"><use href="#tri"/></svg>
<svg style="left:605.5px;top:188px" width="25" height="25" viewBox="0 0 25 25"><path d="M1 8 V1 H8 M17 1 H24 V8 M24 17 V24 H17 M8 24 H1 V17" fill="none" stroke="#a9c8ee" stroke-width="1.500"/><g fill="#b4d0f0" stroke="#3c5574" stroke-width=".7"><circle cx="9" cy="8.500" r="4.300"/><circle cx="16.500" cy="12.500" r="4.300"/><circle cx="9.500" cy="17" r="4.300"/></g><g fill="#e6f0fb"><circle cx="8" cy="7.300" r="1.500"/><circle cx="15.500" cy="11.300" r="1.500"/><circle cx="8.500" cy="15.800" r="1.500"/></g></svg>
<svg style="left:638.5px;top:188px" width="25" height="25" viewBox="0 0 25 25"><path d="M1 8 V1 H8 M17 1 H24 V8 M24 17 V24 H17 M8 24 H1 V17" fill="none" stroke="#6a7a90" stroke-width="1.500" stroke-dasharray="2.500 1.500"/><path d="M8.500 8.500 L16.500 16.500 M16.500 8.500 L8.500 16.500" stroke="#6a7a90" stroke-width="3"/></svg>
<svg style="left:671.5px;top:188px" width="25" height="25" viewBox="0 0 25 25"><path d="M1 8 V1 H8 M17 1 H24 V8 M24 17 V24 H17 M8 24 H1 V17" fill="none" stroke="#6a7a90" stroke-width="1.500" stroke-dasharray="2.500 1.500"/><path d="M12.500 5 L19.500 12.500 H15.500 V19 H9.500 V12.500 H5.500 Z" fill="#6a7a90"/></svg>
<svg style="left:704.5px;top:188px" width="25" height="25" viewBox="0 0 25 25"><path d="M1 8 V1 H8 M17 1 H24 V8 M24 17 V24 H17 M8 24 H1 V17" fill="none" stroke="#6a7a90" stroke-width="1.500" stroke-dasharray="2.500 1.500"/><path d="M6 6 L11 14 L19 6 M11 14 L17 19" stroke="#6a7a90" stroke-width="1.500" fill="none"/><g fill="#6a7a90"><circle cx="6" cy="6" r="2"/><circle cx="11" cy="14" r="3"/><circle cx="19" cy="6" r="2"/><circle cx="17" cy="19" r="2.500"/></g></svg>
<svg style="left:737.5px;top:188px" width="25" height="25" viewBox="0 0 25 25"><path d="M1 8 V1 H8 M17 1 H24 V8 M24 17 V24 H17 M8 24 H1 V17" fill="none" stroke="#6a7a90" stroke-width="1.500" stroke-dasharray="2.500 1.500"/><path d="M5 11 C8 8 11 8 13 9.500 C15 11 17 10.500 20 8.500 M5 16.500 C8 13.500 11 13.500 13 15 C15 16.500 17 16 20 14" stroke="#6a7a90" stroke-width="1.700" fill="none"/></svg>
<svg style="left:770.5px;top:188px" width="25" height="25" viewBox="0 0 25 25"><path d="M1 8 V1 H8 M17 1 H24 V8 M24 17 V24 H17 M8 24 H1 V17" fill="none" stroke="#6a7a90" stroke-width="1.500" stroke-dasharray="2.500 1.500"/><g fill="#6a7a90"><circle cx="9" cy="9" r="3.500"/><circle cx="14.500" cy="8.500" r="3.500"/><circle cx="8" cy="14.500" r="4"/><circle cx="13" cy="14" r="4"/></g><path d="M17 13 V22 M12.500 17.500 H21.500" stroke="#8898ae" stroke-width="2.600"/></svg>
<svg style="left:806px;top:190px" width="22" height="22" viewBox="0 0 19 19"><use href="#mag"/></svg>
<div class="a" style="left:979px;top:184px;width:400px;height:32px;background:#2e3e53;border-radius:5px"></div>
<div class="t" style="left:985px;letter-spacing:-0.40px;transform:scaleX(0.974);transform-origin:0 0;top:193px;color:#eef2f8">Quick access</div>
<svg style="left:1062.3px;top:188.0px" width="26" height="26" viewBox="0 0 26 26"><circle cx="13" cy="13" r="10" fill="none" stroke="#a9c8ee" stroke-width="1.200"/><circle cx="13" cy="13" r="8" fill="none" stroke="#a9c8ee" stroke-width=".8"/><circle cx="13" cy="14" r="1.800" fill="#a9c8ee"/><path d="M13 4 V13 M13 14 L6 19 M13 14 L20 19" stroke="#a9c8ee" stroke-width="1.600"/></svg>
<svg style="left:1093.8px;top:188.0px" width="26" height="26" viewBox="0 0 26 26"><path d="M5 6 L11 11 L18 5 M11 11 L7 19" stroke="#c4d8f0" stroke-width="1.600" fill="none"/><g fill="#c4d8f0" stroke="#4a5d78" stroke-width=".6"><circle cx="5" cy="6" r="2.800"/><circle cx="18" cy="5" r="2.800"/><circle cx="11.500" cy="11" r="3.400"/><circle cx="7" cy="19" r="4.500"/></g><path d="M19 13.500 V24 M13.700 18.800 H24.300" stroke="#1b2636" stroke-width="4.600"/><path d="M19 14.500 V23 M14.700 18.800 H23.300" stroke="#fff" stroke-width="2.600"/></svg>
<svg style="left:1126.0px;top:188.0px" width="26" height="26" viewBox="0 0 26 26"><g stroke-linecap="round"><path d="M9.500 5 L5.500 21" stroke="#5d6f88" stroke-width="5.600"/><path d="M9.500 5 L5.500 21" stroke="#9db8dc" stroke-width="2.200"/><path d="M20 5 L16 21" stroke="#5d6f88" stroke-width="5.600"/><path d="M20 5 L16 21" stroke="#9db8dc" stroke-width="2.200"/></g></svg>
<svg style="left:1158.0px;top:188.0px" width="26" height="26" viewBox="0 0 26 26"><circle cx="8" cy="19" r="4.800" fill="#c4d8f0" stroke="#4a5d78" stroke-width=".6"/><circle cx="6.800" cy="17.600" r="1.700" fill="#fff"/></svg>
<div class="t" style="left:1169px;top:185px;font-size:13px;color:#eef2f8">2</div>
<div class="t" style="left:1176.5px;top:184.5px;font-size:11px;color:#eef2f8">+</div>
<div class="t" style="left:1192.5px;letter-spacing:1.20px;top:192.5px;font-size:14.5px;color:#eef2f8;font-weight:bold">+H</div>
<div class="t" style="left:1224px;letter-spacing:1.20px;top:192.5px;font-size:14.5px;color:#eef2f8;font-weight:bold">–H</div>
<svg style="left:1253.7px;top:188.0px" width="26" height="26" viewBox="0 0 26 26"><path d="M2 13 C6 13 9 22 13 22 C17 22 20 13 24 13" fill="none" stroke="#a9c8ee" stroke-width="1.500"/><path d="M7 4 C11 2 15 5 15 11" fill="none" stroke="#fff" stroke-width="1.600"/><path d="M11.500 10 L15 15.500 L18.500 10 Z" fill="#fff"/></svg>
<svg style="left:1285.8px;top:188.0px" width="26" height="26" viewBox="0 0 26 26"><g fill="#d8c828" stroke="#7d7420" stroke-width=".8"><path d="M11 2 C15 2 16 6 15.500 9 C19 10 22 13 21 17 C20 21 15 21 12 19 C9 21 3 21 2 17 C1 13 4 10 7 9 C6 6 7 2 11 2 Z"/></g><path d="M8 6 C8 4 10 3.500 11 3.500" stroke="#f2ec90" stroke-width="1.500" fill="none"/><path d="M19 13.500 V24 M13.700 18.800 H24.300" stroke="#1b2636" stroke-width="4.600"/><path d="M19 14.500 V23 M14.700 18.800 H23.300" stroke="#fff" stroke-width="2.600"/></svg>
<svg style="left:1317.6px;top:188.0px" width="26" height="26" viewBox="0 0 26 26"><g transform="translate(-2,-1)" opacity=".75"><g fill="#d8c828" stroke="#7d7420" stroke-width=".8"><path d="M11 2 C15 2 16 6 15.500 9 C19 10 22 13 21 17 C20 21 15 21 12 19 C9 21 3 21 2 17 C1 13 4 10 7 9 C6 6 7 2 11 2 Z"/></g><path d="M8 6 C8 4 10 3.500 11 3.500" stroke="#f2ec90" stroke-width="1.500" fill="none"/></g><g transform="translate(2,1) scale(.92)"><g fill="#d8c828" stroke="#7d7420" stroke-width=".8"><path d="M11 2 C15 2 16 6 15.500 9 C19 10 22 13 21 17 C20 21 15 21 12 19 C9 21 3 21 2 17 C1 13 4 10 7 9 C6 6 7 2 11 2 Z"/></g><path d="M8 6 C8 4 10 3.500 11 3.500" stroke="#f2ec90" stroke-width="1.500" fill="none"/></g><path d="M19 13.500 V24 M13.700 18.800 H24.300" stroke="#1b2636" stroke-width="4.600"/><path d="M19 14.500 V23 M14.700 18.800 H23.300" stroke="#fff" stroke-width="2.600"/></svg>
<svg style="left:1350.0px;top:188.0px" width="26" height="26" viewBox="0 0 26 26"><circle cx="19.5" cy="6.5" r="3.59" fill="none" stroke="#5d6f88" stroke-width="3.60" stroke-dasharray="2.15 0.67" stroke-dashoffset="0.4" transform="rotate(-10 19.5 6.5)"/><circle cx="19.5" cy="6.5" r="2.60" fill="none" stroke="#5d6f88" stroke-width="3.80"/><circle cx="19.5" cy="6.5" r="3.59" fill="none" stroke="#e6ecf4" stroke-width="2.20" stroke-dasharray="1.35 1.47" transform="rotate(-10 19.5 6.5)"/><circle cx="19.5" cy="6.5" r="2.60" fill="none" stroke="#e6ecf4" stroke-width="2.20"/><circle cx="9.5" cy="16.5" r="5.84" fill="none" stroke="#5d6f88" stroke-width="4.60" stroke-dasharray="3.00 1.59" stroke-dashoffset="0.4" transform="rotate(-10 9.5 16.5)"/><circle cx="9.5" cy="16.5" r="4.40" fill="none" stroke="#5d6f88" stroke-width="4.80"/><circle cx="9.5" cy="16.5" r="5.84" fill="none" stroke="#e6ecf4" stroke-width="3.20" stroke-dasharray="2.20 2.39" transform="rotate(-10 9.5 16.5)"/><circle cx="9.5" cy="16.5" r="4.40" fill="none" stroke="#e6ecf4" stroke-width="3.20"/><path d="M19 13.500 V24 M13.700 18.800 H24.300" stroke="#1b2636" stroke-width="4.600"/><path d="M19 14.500 V23 M14.700 18.800 H23.300" stroke="#fff" stroke-width="2.600"/></svg>
<div class="a" style="left:299px;top:379.5px;width:32px;height:95px;background:#2e3e53;border-radius:4px"></div>
<div class="t" style="left:303px;letter-spacing:-0.05px;top:380.4px;font-size:11.5px;color:#dfe6ef">PDB</div>
<svg style="left:304px;top:394px" width="22" height="12" viewBox="0 0 22 12"><path d="M1 6 V11 H21 V6" fill="none" stroke="#dfe6ef" stroke-width="1.600"/><path d="M11 0 V5" stroke="#dfe6ef" stroke-width="3"/><path d="M6.500 4 H15.500 L11 9 Z" fill="#dfe6ef"/></svg>
<svg style="left:303px;top:413px" width="25" height="27" viewBox="0 0 25 27"><g transform="translate(1,7) scale(.85)"><use href="#blob"/></g><path d="M10.500 9 L15.500 8 L16.500 12.500 L13 14 Z" fill="#ecd050"/><path d="M2 8 L3.500 11" stroke="#e87898" stroke-width="2.600" stroke-linecap="round"/><path d="M8 4.500 L11 2.500" stroke="#f0a058" stroke-width="3" stroke-linecap="round"/><path d="M17.500 2.500 L20 4" stroke="#7fb8f0" stroke-width="2.400" stroke-linecap="round"/></svg>
<div class="t" style="left:303.5px;letter-spacing:0.13px;top:446px;font-size:13px;color:#eef2f8;font-weight:bold">Gro</div>
<svg style="left:304px;top:459px" width="24" height="14" viewBox="0 0 24 14"><path d="M14 1 L22 12" stroke="#5d6f88" stroke-width="4.500"/><path d="M14 1 L22 12" stroke="#cfd8e6" stroke-width="2.400"/><g fill="#f2dc50"><path d="M6 2 L7.200 5.800 L11 7 L7.200 8.200 L6 12 L4.800 8.200 L1 7 L4.800 5.800 Z"/><path d="M13 8 L13.800 10.200 L16 11 L13.800 11.800 L13 14 L12.200 11.800 L10 11 L12.200 10.200 Z"/></g></svg>
<!-- PROTEIN -->
<svg style="left:0;top:0" width="1383" height="933" viewBox="0 0 1383 933"><defs><filter id="pblur" x="-20%" y="-20%" width="140%" height="140%"><feGaussianBlur stdDeviation="4"/></filter><path id="p_green" d="M719.6 417.9C720.1 414.0 725.2 408.1 728.5 403.9C731.7 399.6 736.6 399.0 739.2 392.3C741.7 385.7 740.2 371.2 743.8 364.0C747.4 356.9 756.3 352.9 760.7 349.4C765.0 345.8 766.0 342.7 769.8 342.8C773.7 342.8 778.6 347.7 783.6 349.6C788.6 351.6 796.0 350.0 799.7 354.6C803.4 359.2 803.1 370.6 805.6 377.2C808.2 383.8 811.7 387.4 814.9 394.2C818.1 401.0 822.6 412.3 824.9 418.1C827.1 423.9 828.5 426.3 828.4 428.9C828.2 431.6 829.2 431.0 824.0 434.1C818.8 437.2 803.5 444.5 797.0 447.6C790.6 450.6 791.0 453.3 785.4 452.4C779.8 451.5 769.6 442.0 763.7 442.1C757.8 442.1 754.1 448.1 750.2 452.8C746.4 457.5 743.2 468.7 740.8 470.1C738.4 471.6 737.9 464.9 735.9 461.6C733.9 458.4 730.8 456.2 729.1 450.4C727.4 444.7 727.3 432.4 725.8 427.0C724.2 421.6 719.2 421.7 719.6 417.9ZM743.6 419.4C743.9 415.7 743.6 407.9 747.4 401.1C751.1 394.3 760.4 383.8 766.2 378.5C772.0 373.2 776.7 368.4 782.1 369.2C787.5 370.1 795.4 375.0 798.6 383.6C801.9 392.2 801.4 413.5 801.6 420.7C801.8 427.8 804.5 423.5 799.9 426.6C795.4 429.6 780.7 436.9 774.3 439.0C767.9 441.2 764.9 439.3 761.5 439.5C758.1 439.8 756.4 443.0 753.7 440.3C751.1 437.5 747.3 426.6 745.6 423.1C744.0 419.6 743.3 423.0 743.6 419.4ZM782.0 402.6C784.0 399.0 794.3 387.9 793.7 381.0C793.1 374.0 784.4 363.1 778.5 360.9C772.6 358.6 762.6 364.0 758.2 367.5C753.8 371.1 750.2 376.6 752.2 382.2C754.2 387.8 764.2 398.6 770.2 401.3C776.2 404.1 785.0 399.1 788.0 398.7M750.0 397.5C750.5 400.4 749.7 409.6 752.9 414.9C756.1 420.2 764.7 424.4 769.2 429.3C773.7 434.1 774.8 442.7 779.8 444.1C784.9 445.4 793.1 440.7 799.4 437.2C805.6 433.6 814.9 429.1 817.3 422.7C819.7 416.3 816.9 403.5 813.9 398.8C811.0 394.0 801.9 395.1 799.5 394.4M785.7 363.6C784.7 367.1 778.3 378.2 779.7 384.4C781.1 390.6 793.5 394.9 794.1 400.8C794.7 406.6 785.2 413.7 783.3 419.6C781.4 425.4 785.9 432.0 782.8 435.9C779.6 439.8 772.1 442.4 764.3 442.9C756.5 443.4 740.6 439.8 735.9 439.2M800.9 382.6C800.4 379.6 801.9 370.5 798.0 364.7C794.0 358.8 782.6 349.2 777.1 347.6C771.5 346.0 768.1 351.0 764.7 355.0C761.3 358.9 758.0 368.5 756.6 371.3M759.2 372.8C761.1 375.8 771.5 385.0 770.9 391.1C770.3 397.2 755.5 402.4 755.7 409.3C755.8 416.3 765.7 426.8 771.8 432.9C778.0 439.0 784.7 446.1 792.4 445.9C800.0 445.6 813.6 434.0 817.8 431.6M797.1 403.5C798.5 401.1 805.4 394.1 805.7 389.2C806.0 384.3 804.4 377.7 798.9 374.3C793.3 370.8 780.5 368.6 772.3 368.3C764.1 367.9 753.6 371.4 749.8 372.1M823.5 427.2C818.9 427.2 802.2 429.5 795.6 427.4C789.0 425.2 789.0 417.2 784.0 414.4C779.0 411.6 772.2 409.6 765.7 410.8C759.1 412.0 749.9 416.7 744.9 421.5C739.9 426.4 737.1 437.0 735.6 440.0M734.4 460.2C738.4 457.5 753.7 450.4 758.5 444.3C763.2 438.2 762.2 430.4 763.0 423.6C763.7 416.8 764.8 410.4 762.9 403.3C761.0 396.3 753.7 388.4 751.4 381.4C749.2 374.5 746.5 366.3 749.3 361.7C752.1 357.1 765.0 355.1 768.2 353.8M765.2 390.0C768.2 387.7 778.5 379.9 783.1 375.8C787.7 371.7 789.8 364.9 792.8 365.3C795.9 365.8 798.7 373.8 801.4 378.5C804.0 383.3 808.9 388.3 808.7 393.9C808.5 399.6 801.7 409.3 800.3 412.4M774.3 432.0C777.2 428.3 786.3 414.5 791.8 410.0C797.3 405.6 801.9 401.9 807.3 405.2C812.7 408.5 825.3 423.1 824.1 429.7C822.9 436.3 808.1 443.1 800.2 444.9C792.4 446.8 780.9 441.6 777.0 440.9M801.6 436.2C798.1 434.1 787.9 423.0 780.8 423.6C773.7 424.2 766.3 438.7 758.9 440.0C751.5 441.2 742.0 434.4 736.5 431.1C731.1 427.8 727.0 425.0 726.0 420.4C724.9 415.8 724.6 406.9 730.1 403.7C735.6 400.5 754.2 401.7 759.0 401.3M768.2 378.9C770.7 379.4 778.8 379.3 783.3 382.1C787.8 384.9 789.8 391.7 795.2 395.8C800.7 400.0 813.0 401.0 816.1 407.0C819.2 413.0 816.4 426.4 813.9 431.8C811.3 437.2 802.9 438.1 800.7 439.3M787.9 363.7C791.0 367.0 801.4 375.7 806.4 383.3C811.4 390.9 818.6 402.3 818.0 409.5C817.4 416.7 807.7 423.0 802.8 426.5C797.9 430.0 794.3 430.9 788.5 430.4C782.8 429.9 774.1 428.0 768.5 423.5C762.9 418.9 759.6 407.6 755.2 403.1C750.7 398.7 744.0 398.0 741.8 396.9"/><path id="p_yellow" d="M789.1 338.9C787.4 338.2 789.5 334.8 794.9 331.2C800.3 327.6 815.4 322.0 821.5 317.2C827.6 312.4 826.8 304.3 831.4 302.6C835.9 300.9 845.5 305.7 848.8 307.0C852.1 308.3 845.0 310.1 851.3 310.5C857.5 310.9 876.5 307.3 886.3 309.3C896.2 311.4 905.1 320.2 910.5 322.7C915.9 325.3 917.4 321.6 918.8 324.6C920.2 327.6 921.5 336.9 919.0 340.5C916.5 344.1 905.5 343.8 903.7 346.2C902.0 348.6 911.2 351.0 908.5 355.0C905.7 358.9 892.2 365.1 887.2 370.0C882.2 374.8 882.5 381.0 878.7 383.8C874.9 386.6 868.4 385.7 864.3 386.9C860.3 388.1 856.4 387.0 854.2 391.1C852.1 395.1 854.0 407.8 851.6 411.1C849.1 414.5 842.3 414.6 839.4 411.2C836.4 407.8 837.6 395.1 833.8 390.9C830.1 386.7 820.5 390.8 816.8 386.1C813.2 381.5 812.4 370.6 812.0 363.1C811.7 355.7 815.9 346.2 814.8 341.6C813.7 337.0 809.6 336.0 805.4 335.5C801.1 335.1 790.9 339.7 789.1 338.9ZM811.0 344.2C812.7 342.4 833.4 338.9 840.8 334.5C848.2 330.1 850.9 318.8 855.5 317.9C860.1 317.1 861.2 326.5 868.5 329.4C875.9 332.3 896.8 333.3 899.7 335.4C902.7 337.6 890.6 336.6 886.2 342.4C881.8 348.3 877.1 364.5 873.5 370.3C870.0 376.1 867.1 374.9 864.7 377.4C862.4 379.8 863.9 385.9 859.4 385.0C854.8 384.1 842.5 375.9 837.4 371.9C832.2 367.9 829.4 365.4 828.3 361.0C827.2 356.6 833.6 348.4 830.7 345.6C827.8 342.8 809.4 346.1 811.0 344.2ZM847.3 363.5C851.6 361.4 865.7 353.3 873.2 351.1C880.6 348.8 887.3 352.6 892.0 349.8C896.7 347.0 900.8 339.1 901.2 334.3C901.6 329.4 898.2 324.2 894.3 320.8C890.4 317.4 880.5 314.9 877.8 313.7M852.7 376.8C851.5 380.0 847.4 396.5 845.4 396.2C843.4 396.0 844.3 382.0 840.7 375.3C837.2 368.5 826.0 363.9 824.1 355.8C822.2 347.7 828.3 334.0 829.3 326.5C830.2 319.0 829.6 313.4 829.7 310.8M842.4 399.6C840.4 396.5 833.3 387.4 830.7 381.4C828.1 375.5 827.0 370.2 826.6 363.9C826.3 357.6 829.1 350.4 828.6 343.5C828.1 336.7 823.3 328.3 823.8 322.7C824.3 317.1 830.4 312.1 831.8 310.0M866.8 343.1C867.2 347.3 867.0 361.6 869.0 368.4C871.0 375.3 879.3 384.2 878.8 384.0C878.3 383.8 868.0 370.1 865.9 367.3M817.9 348.9C817.1 344.4 811.6 327.5 813.1 321.8C814.7 316.1 820.4 314.0 827.1 314.7C833.8 315.5 846.7 326.6 853.3 326.4C859.9 326.1 860.9 313.8 866.6 313.3C872.3 312.8 884.1 321.8 887.6 323.5M901.2 352.4C899.3 355.3 895.0 367.4 890.1 369.7C885.1 372.0 877.6 368.0 871.4 366.4C865.2 364.7 860.5 361.3 852.8 359.6C845.2 357.8 829.9 356.5 825.3 355.9M895.1 347.8C894.2 345.2 889.9 337.6 889.8 332.4C889.7 327.1 891.6 314.9 894.5 316.3C897.3 317.7 906.7 332.6 907.0 340.8C907.4 349.1 901.7 360.1 896.5 365.7C891.3 371.2 881.9 372.6 876.0 373.9C870.2 375.2 863.8 373.6 861.4 373.6M828.3 381.7C831.1 385.2 843.0 402.0 844.9 402.5C846.8 403.1 841.5 392.6 839.8 385.2C838.1 377.8 834.1 365.6 834.6 358.0C835.1 350.5 841.1 346.2 842.9 339.9C844.6 333.5 846.9 325.6 845.0 320.1C843.0 314.6 833.3 309.0 830.9 306.8M826.1 359.6C827.1 362.6 829.8 372.4 832.4 377.2C835.1 382.0 838.0 387.3 841.9 388.5C845.9 389.6 850.6 385.1 856.1 383.9C861.6 382.7 870.1 384.7 874.8 381.3C879.4 378.0 879.8 367.3 884.0 363.7C888.2 360.2 897.4 360.5 900.1 359.9M880.2 352.6C883.3 353.0 893.5 358.4 898.3 355.2C903.0 352.0 909.5 339.7 908.8 333.3C908.0 326.8 900.3 318.0 893.6 316.7C886.9 315.3 872.6 319.7 868.4 324.9C864.3 330.1 868.7 343.9 868.8 347.7M813.3 369.6C816.3 370.8 823.6 377.0 831.1 376.9C838.6 376.8 849.7 369.9 858.5 368.8C867.2 367.6 876.3 372.4 883.5 370.0C890.7 367.7 899.9 361.8 901.9 354.6C903.9 347.4 898.7 332.4 895.5 326.8C892.2 321.1 884.5 321.8 882.3 320.9M832.5 319.1C833.8 317.0 835.9 307.0 840.5 306.4C845.1 305.8 854.2 310.3 859.9 315.7C865.6 321.1 872.1 334.8 874.5 338.7M862.7 334.9C860.2 338.4 848.5 349.7 847.7 356.1C846.8 362.4 851.9 370.1 857.8 372.8C863.6 375.5 875.9 375.9 882.9 372.3C889.8 368.6 897.7 359.2 899.5 350.9C901.3 342.6 894.5 327.2 893.5 322.5"/><path id="p_orange" d="M867.0 417.0C867.0 413.2 872.6 409.7 874.5 405.3C876.3 400.9 874.9 394.5 878.0 390.6C881.1 386.8 887.7 385.0 893.0 382.1C898.2 379.2 905.5 380.1 909.5 373.2C913.4 366.3 913.3 345.9 916.6 340.7C919.9 335.5 924.0 339.1 929.4 342.0C934.7 344.9 944.0 353.4 948.6 357.9C953.3 362.5 953.4 367.4 957.4 369.4C961.3 371.5 971.2 368.6 972.5 370.2C973.8 371.8 964.8 375.4 965.1 379.1C965.4 382.7 972.0 383.7 974.3 392.0C976.7 400.3 978.0 418.7 979.2 428.8C980.4 438.9 981.8 447.4 981.6 452.5C981.4 457.7 980.9 458.1 977.8 459.9C974.6 461.7 967.6 463.8 962.9 463.4C958.3 463.0 954.3 457.3 949.9 457.6C945.6 457.9 938.8 464.6 936.7 465.2C934.5 465.7 941.5 464.1 937.2 461.0C932.9 457.8 916.6 450.5 910.7 446.3C904.9 442.2 905.1 438.5 902.3 436.2C899.4 434.0 898.2 434.1 893.6 432.7C888.9 431.3 878.8 430.5 874.4 427.9C869.9 425.3 867.0 420.7 867.0 417.0ZM891.6 412.4C892.0 410.4 891.8 408.3 895.3 405.1C898.9 401.8 905.8 399.8 912.7 393.0C919.6 386.1 930.7 366.2 937.0 363.9C943.2 361.6 948.4 375.6 950.2 379.2C952.1 382.9 946.6 379.2 948.1 385.8C949.6 392.3 957.8 410.4 959.2 418.7C960.6 427.0 958.6 432.3 956.6 435.4C954.7 438.5 950.4 436.5 947.6 437.3C944.7 438.2 946.5 441.8 939.5 440.6C932.4 439.5 912.9 434.4 905.2 430.4C897.5 426.4 895.5 419.7 893.2 416.7C890.9 413.7 891.3 414.3 891.6 412.4ZM946.9 414.0C946.0 410.0 939.8 397.0 941.8 390.1C943.7 383.2 955.9 370.6 958.7 372.7C961.4 374.8 955.6 395.0 958.2 402.5C960.8 410.1 971.5 415.4 974.2 417.9M973.7 431.9C970.4 431.6 958.2 428.5 953.6 430.4C949.1 432.4 951.6 441.6 946.3 443.8C941.1 446.0 929.8 445.3 922.3 443.5C914.8 441.7 904.9 434.8 901.5 433.1M888.1 420.9C885.9 417.5 873.0 405.3 875.0 400.5C877.0 395.7 893.8 395.2 900.0 391.9C906.2 388.6 906.0 381.4 912.3 380.9C918.5 380.5 933.4 387.9 937.6 389.3M936.1 438.4C932.1 437.3 920.1 434.4 912.0 431.8C903.9 429.2 894.4 425.8 887.7 422.9C880.9 420.0 872.1 418.5 871.6 414.3C871.1 410.1 879.3 400.7 884.6 397.8C889.9 394.9 900.2 397.0 903.3 396.9M961.6 390.9C959.8 388.1 956.2 378.1 950.9 374.5C945.5 371.0 935.1 368.6 929.5 369.7C923.9 370.9 921.9 379.1 917.3 381.7C912.6 384.2 905.1 382.2 901.6 385.1C898.2 388.0 900.9 395.3 896.8 399.1C892.7 402.8 880.2 406.1 876.9 407.5M923.7 408.5C919.9 410.3 908.9 416.8 901.1 419.4C893.2 422.1 881.9 425.6 876.7 424.4C871.4 423.2 869.1 416.3 869.5 412.2C870.0 408.2 877.6 402.3 879.3 400.3M955.3 429.9C955.8 426.1 957.2 415.0 958.1 407.2C959.1 399.3 962.6 387.9 961.0 382.6C959.4 377.3 954.4 373.8 948.5 375.3C942.5 376.8 929.3 388.9 925.5 391.6M945.2 417.9C942.5 418.2 933.8 422.0 928.6 419.6C923.4 417.2 919.6 405.1 914.0 403.4C908.5 401.7 901.7 408.1 895.1 409.5C888.5 410.9 873.9 410.7 874.2 411.9C874.5 413.0 893.1 415.7 896.9 416.4M959.2 426.3C961.9 424.4 973.7 420.4 975.9 415.2C978.2 410.0 974.8 401.8 972.6 395.1C970.4 388.4 967.6 378.1 962.5 374.9C957.4 371.6 948.5 375.4 942.1 375.5C935.7 375.5 929.0 377.6 924.0 375.0C919.0 372.4 914.0 362.6 912.0 360.1M924.3 365.4C928.0 367.5 939.1 374.7 946.4 377.6C953.6 380.6 964.3 378.9 967.9 383.2C971.6 387.5 970.2 397.8 968.5 403.2C966.7 408.6 959.4 413.5 957.6 415.6M934.9 383.5C933.1 385.8 930.1 395.2 924.6 397.4C919.0 399.6 908.2 397.5 901.6 396.7C894.9 395.8 889.4 390.3 884.7 392.3C880.0 394.3 875.1 405.8 873.2 408.5M947.4 401.3C951.4 401.2 971.9 402.6 971.6 400.6C971.3 398.7 954.5 392.8 945.7 389.5C936.8 386.1 923.1 381.9 918.5 380.4M937.3 387.0C941.8 385.2 960.4 375.3 964.0 376.1C967.6 376.9 964.2 387.4 958.8 391.8C953.3 396.3 936.9 397.2 931.3 403.0C925.7 408.7 926.5 418.8 925.0 426.4C923.6 434.0 920.0 443.1 922.6 448.4C925.2 453.7 937.7 456.4 940.7 458.0"/><path id="p_red" d="M856.6 444.4C860.0 438.6 869.4 440.1 873.7 441.1C878.1 442.1 879.6 449.6 882.7 450.4C885.7 451.1 888.0 446.7 891.9 445.6C895.8 444.6 903.1 441.9 905.9 443.9C908.8 445.8 906.4 453.5 908.8 457.2C911.2 460.8 918.7 461.3 920.2 465.8C921.7 470.4 914.5 482.2 917.6 484.5C920.8 486.7 933.1 480.6 939.0 479.6C945.0 478.5 949.4 480.2 953.5 478.1C957.6 476.0 962.8 466.9 963.7 467.1C964.6 467.2 961.4 472.4 959.1 478.9C956.8 485.4 952.2 501.0 949.9 506.1C947.6 511.2 944.9 506.9 945.2 509.8C945.6 512.6 954.9 520.1 952.0 523.3C949.2 526.5 936.9 526.7 928.2 528.8C919.4 531.0 904.9 533.1 899.7 536.3C894.6 539.5 900.8 544.7 897.1 548.1C893.5 551.4 882.4 555.6 878.0 556.4C873.6 557.2 873.6 554.6 870.8 552.9C868.0 551.2 862.6 550.4 861.2 546.3C859.7 542.3 863.4 531.1 861.9 528.8C860.3 526.5 854.5 533.4 851.7 532.7C848.9 531.9 844.9 526.8 845.1 524.4C845.2 522.0 851.8 523.6 852.8 518.4C853.9 513.1 851.6 500.0 851.6 493.0C851.6 485.9 852.2 484.2 853.0 476.2C853.9 468.1 853.1 450.2 856.6 444.4ZM872.5 458.7C875.6 456.4 889.5 464.2 893.8 464.0C898.1 463.8 894.9 456.1 898.4 457.6C901.8 459.0 910.9 467.3 914.8 472.5C918.7 477.6 916.7 488.8 921.6 488.5C926.5 488.1 941.7 467.6 944.3 470.4C946.8 473.3 939.7 497.7 937.1 505.5C934.5 513.3 934.5 514.7 928.7 517.2C922.8 519.7 909.9 518.1 902.0 520.7C894.1 523.3 886.5 532.8 881.5 532.8C876.5 532.7 874.6 523.4 872.0 520.4C869.3 517.5 866.4 516.4 865.8 514.9C865.3 513.3 867.0 517.4 868.6 511.2C870.2 505.0 874.6 486.6 875.2 477.9C875.9 469.1 869.4 461.0 872.5 458.7ZM907.5 467.2C906.1 469.6 905.6 478.3 899.5 481.8C893.5 485.3 879.0 485.5 871.3 488.3C863.6 491.1 855.9 493.1 853.3 498.5C850.6 503.9 852.8 514.5 855.6 520.7C858.4 526.9 866.2 530.2 869.9 535.8C873.6 541.3 876.5 550.9 877.8 553.9M877.3 469.0C877.8 472.9 880.2 484.5 880.5 492.5C880.9 500.5 876.8 509.7 879.4 516.9C882.0 524.1 890.5 534.0 896.3 535.8C902.1 537.6 907.7 530.0 914.2 527.6C920.6 525.3 930.7 524.9 935.2 521.6C939.7 518.3 940.1 510.0 941.1 507.7M946.7 491.6C946.3 495.7 948.0 511.0 944.4 516.3C940.8 521.6 931.0 522.5 925.0 523.5C919.1 524.4 914.6 519.8 908.8 522.1C903.1 524.3 898.1 536.6 890.5 537.2C882.8 537.7 870.2 527.7 863.0 525.2C855.9 522.8 850.2 522.9 847.6 522.4M878.7 502.7C877.1 506.1 871.1 515.6 869.3 522.9C867.4 530.2 868.5 544.8 867.7 546.3C866.9 547.9 867.0 538.4 864.5 532.0C862.0 525.6 853.2 515.6 852.9 508.1C852.6 500.6 859.0 492.3 862.9 486.9C866.7 481.6 873.8 477.8 876.0 475.9M902.2 504.6C901.3 507.9 899.4 519.6 896.3 524.3C893.1 529.1 885.3 529.0 883.4 533.2C881.4 537.5 887.4 550.4 884.6 549.9C881.7 549.4 869.3 533.7 866.3 530.5M872.0 460.9C874.6 464.8 882.7 478.2 887.8 484.2C893.0 490.1 896.0 493.5 903.0 496.9C910.0 500.3 925.1 499.7 929.9 504.4C934.7 509.1 931.6 521.6 932.0 525.1M844.8 522.7C847.7 519.4 854.6 505.5 862.1 502.8C869.5 500.1 882.9 508.2 889.6 506.6C896.3 505.0 901.9 499.1 902.2 493.1C902.4 487.2 892.9 477.9 890.9 471.0C888.8 464.0 890.1 454.6 890.0 451.4M892.1 516.8C894.9 514.9 903.9 506.1 909.0 505.4C914.2 504.7 917.6 511.4 923.0 512.4C928.3 513.3 936.2 515.0 941.2 510.9C946.3 506.8 950.3 494.6 953.4 487.7C956.5 480.8 958.7 472.4 959.8 469.3M902.9 520.2C905.1 516.7 914.9 506.9 916.4 499.4C917.9 491.9 916.5 481.3 911.9 475.0C907.2 468.8 895.6 463.7 888.7 462.1C881.9 460.5 875.3 467.1 870.8 465.3C866.4 463.4 861.6 452.1 862.2 451.0C862.9 449.9 872.8 457.3 874.9 458.5M900.8 526.9C899.8 529.6 900.0 539.8 895.1 543.0C890.1 546.2 878.5 549.1 871.0 546.3C863.5 543.6 853.4 534.1 850.1 526.5C846.8 518.9 848.7 506.9 851.4 500.6C854.1 494.3 861.8 493.9 866.3 488.7C870.8 483.4 876.3 472.5 878.3 469.2M886.9 536.6C887.7 539.0 892.4 550.5 891.6 550.7C890.7 550.8 886.5 542.1 881.8 537.4C877.1 532.7 866.5 525.0 863.4 522.5M921.4 506.0C917.9 508.1 905.6 513.7 900.5 518.6C895.5 523.6 895.1 532.7 891.2 535.7C887.2 538.7 881.7 536.0 876.8 536.7C871.8 537.4 867.0 541.9 861.7 539.8C856.4 537.8 846.3 531.0 844.9 524.4C843.5 517.8 851.9 504.3 853.3 500.3M854.9 504.1C856.6 502.5 860.7 494.3 865.5 494.5C870.3 494.7 879.6 499.9 883.6 505.2C887.6 510.5 885.6 522.1 889.6 526.2C893.6 530.2 904.5 528.9 907.4 529.5"/><path id="p_teal" d="M824.1 451.2C827.5 449.4 838.0 450.2 840.5 452.8C842.9 455.5 837.6 462.1 838.7 467.2C839.7 472.3 845.2 480.1 846.8 483.5C848.3 486.9 849.4 486.5 848.0 487.8C846.6 489.2 839.5 488.2 838.3 491.6C837.2 495.1 843.7 505.6 841.1 508.5C838.4 511.5 824.2 507.1 822.4 509.5C820.7 511.8 829.2 517.8 830.7 522.6C832.1 527.4 827.6 533.7 831.2 538.2C834.8 542.7 850.4 547.5 852.0 549.7C853.6 551.9 848.6 552.0 840.9 551.4C833.3 550.7 813.2 544.9 806.2 545.6C799.3 546.4 801.5 556.3 799.3 556.1C797.1 555.8 796.7 548.9 792.9 544.1C789.1 539.4 783.6 533.8 776.6 527.7C769.5 521.5 756.6 512.8 750.6 507.2C744.6 501.5 741.7 498.8 740.6 493.6C739.5 488.5 741.9 481.5 744.2 476.3C746.4 471.2 752.0 466.2 754.2 462.7C756.4 459.2 753.0 456.8 757.2 455.4C761.4 454.0 771.9 453.9 779.3 454.2C786.8 454.6 795.2 456.1 801.9 457.5C808.6 459.0 816.0 464.2 819.7 463.1C823.3 462.1 820.6 452.9 824.1 451.2ZM813.6 466.1C815.3 468.7 816.8 481.1 819.4 485.7C822.1 490.2 828.2 491.3 829.5 493.6C830.9 495.9 828.7 495.2 827.7 499.7C826.7 504.1 821.3 516.5 823.4 520.5C825.4 524.5 843.7 522.3 840.2 523.5C836.7 524.6 809.2 527.9 802.4 527.5C795.7 527.1 804.1 524.2 799.6 521.0C795.2 517.9 781.5 514.2 775.7 508.8C769.9 503.5 765.5 496.1 764.8 489.0C764.1 481.8 764.2 468.9 771.5 465.8C778.9 462.7 802.1 470.4 809.1 470.5C816.1 470.6 811.9 463.6 813.6 466.1ZM819.5 484.8C822.4 481.4 835.1 470.1 836.8 464.6C838.4 459.2 829.5 450.9 829.2 452.0C828.9 453.0 832.0 465.1 834.9 470.8C837.9 476.6 846.3 481.4 846.8 486.3C847.3 491.2 839.3 497.7 837.8 500.0M809.8 491.9C812.4 492.4 821.4 492.4 825.4 494.9C829.4 497.3 833.3 499.9 833.9 506.6C834.5 513.2 833.0 529.0 829.1 534.8C825.1 540.6 813.4 540.4 810.2 541.5M812.9 541.1C815.4 539.7 824.7 538.7 828.0 532.7C831.3 526.7 833.2 512.8 832.8 505.3C832.4 497.8 828.6 494.7 825.4 487.5C822.2 480.2 815.6 466.1 813.6 461.8M806.2 497.5C805.5 493.2 807.1 477.3 802.1 472.0C797.1 466.8 784.2 467.3 776.4 466.0C768.6 464.8 760.0 462.3 755.5 464.6C751.0 466.8 747.1 473.7 749.5 479.5C751.8 485.4 766.3 496.1 769.6 499.4M764.2 506.8C761.4 503.2 748.9 490.9 747.4 485.1C745.9 479.3 749.3 473.3 755.1 472.0C760.9 470.6 777.3 473.3 782.3 477.0C787.3 480.8 784.7 491.5 785.1 494.4M790.0 479.2C785.5 478.3 770.8 471.4 762.6 473.9C754.3 476.4 740.7 491.8 740.4 494.1C740.1 496.3 753.9 487.5 760.9 487.4C767.9 487.2 776.0 491.6 782.5 493.1C789.0 494.6 793.3 499.2 799.7 496.5C806.1 493.9 817.6 480.5 821.1 477.2M798.5 505.1C796.0 506.4 789.7 513.0 783.8 513.2C778.0 513.4 770.5 510.4 763.6 506.3C756.8 502.3 744.5 495.6 742.7 488.9C740.9 482.2 747.1 471.4 752.8 465.9C758.5 460.5 770.6 456.3 777.1 456.2C783.6 456.1 789.3 463.8 791.7 465.3M786.6 533.8C787.7 529.7 792.2 515.7 793.2 509.2C794.1 502.6 789.7 501.0 792.3 494.5C794.9 488.0 803.4 474.3 808.8 470.1C814.3 465.9 819.6 466.3 824.9 469.0C830.1 471.8 838.2 481.1 840.3 486.5C842.3 491.9 837.6 499.0 837.0 501.4M789.1 491.1C789.1 494.9 788.1 505.3 788.8 514.1C789.5 522.9 791.7 542.8 793.3 543.7C795.0 544.5 797.6 523.4 798.5 519.3M773.5 475.6C770.5 475.1 760.7 471.6 755.7 472.5C750.7 473.3 744.9 476.3 743.4 480.9C742.0 485.4 743.4 493.3 747.2 499.5C751.0 505.8 758.8 514.2 766.1 518.4C773.4 522.6 784.6 520.1 790.7 524.5C796.8 528.9 797.4 541.7 802.8 544.6C808.3 547.5 820.2 542.5 823.6 542.1M836.0 456.7C832.7 459.3 822.0 469.6 815.9 472.4C809.7 475.1 805.1 470.0 799.3 473.1C793.4 476.2 788.4 487.3 780.9 490.8C773.4 494.3 758.7 493.6 754.3 494.1M776.5 491.9C780.0 488.7 790.1 473.3 797.8 472.6C805.4 471.9 815.8 483.4 822.5 487.8C829.1 492.1 837.7 497.7 837.7 498.6C837.7 499.5 827.9 495.6 822.6 492.9C817.3 490.2 808.7 484.2 806.0 482.5M781.2 520.0C785.1 518.9 798.2 513.0 804.7 513.8C811.1 514.5 816.1 519.3 820.0 524.7C823.9 530.0 824.3 541.8 828.1 545.8C831.8 549.7 840.2 548.0 842.7 548.4"/><radialGradient id="pur" cx=".38" cy=".35" r=".7"><stop offset="0" stop-color="#8a48c0"/><stop offset=".45" stop-color="#52197e"/><stop offset="1" stop-color="#2c0e48"/></radialGradient></defs><path d="M720 420L728 406L739 393L746 364L763 350L772 345L784 348L802 356L805 375L814 395L822 420L827 430L826 436L798 446L787 452L763 443L750 455L743 472L735 462L730 450L726 428Z" fill="#124a34" opacity=".22" filter="url(#pblur)"/><g fill="none" stroke-linecap="round" stroke-linejoin="round"><use href="#p_green" stroke="#124a34" stroke-width="3"/><use href="#p_green" stroke="#1e7250" stroke-width="1.5" transform="translate(-.3,-.4)"/><g stroke="#124a34" stroke-width="2.2"><ellipse cx="824.0" cy="428.0" rx="4" ry="8.5"/><ellipse cx="820.0" cy="428.2" rx="4" ry="8.5"/><ellipse cx="816.0" cy="428.5" rx="4" ry="8.5"/><ellipse cx="812.0" cy="428.8" rx="4" ry="8.5"/><ellipse cx="808.0" cy="429.0" rx="4" ry="8.5"/><ellipse cx="798.4" cy="390.0" rx="8" ry="3.5"/><ellipse cx="798.7" cy="393.8" rx="8" ry="3.5"/><ellipse cx="799.0" cy="397.6" rx="8" ry="3.5"/><ellipse cx="799.4" cy="401.4" rx="8" ry="3.5"/><ellipse cx="799.7" cy="405.2" rx="8" ry="3.5"/><ellipse cx="800.0" cy="409.0" rx="8" ry="3.5"/><ellipse cx="765.0" cy="405.0" rx="7" ry="4"/><ellipse cx="767.3" cy="407.6" rx="7" ry="4"/><ellipse cx="769.7" cy="410.1" rx="7" ry="4"/><ellipse cx="772.0" cy="412.7" rx="7" ry="4"/><ellipse cx="774.3" cy="415.2" rx="7" ry="4"/><ellipse cx="776.7" cy="417.8" rx="7" ry="4"/><ellipse cx="779.0" cy="420.3" rx="7" ry="4"/><ellipse cx="781.3" cy="422.9" rx="7" ry="4"/><ellipse cx="783.7" cy="425.4" rx="7" ry="4"/><ellipse cx="786.0" cy="428.0" rx="7" ry="4"/><ellipse cx="775.0" cy="372.0" rx="7" ry="3"/><ellipse cx="776.0" cy="375.5" rx="7" ry="3"/><ellipse cx="777.0" cy="379.0" rx="7" ry="3"/><ellipse cx="778.0" cy="382.5" rx="7" ry="3"/><ellipse cx="779.0" cy="386.0" rx="7" ry="3"/></g><path d="M738.5 398.8L743.4 414.9L741.5 415.4L748.0 421.0L750.3 412.8L748.4 413.3L743.5 397.2ZM726.5 430.7L734.9 458.7L733.0 459.3L741.0 470.0L741.8 456.7L739.9 457.3L731.5 429.3ZM741.5 432.7L745.7 446.7L743.8 447.3L750.0 452.0L752.6 444.7L750.7 445.3L746.5 431.3ZM761.8 441.8L770.2 433.4L771.7 434.9L772.0 428.0L765.1 428.3L766.6 429.8L758.2 438.2ZM788.7 436.2L795.7 440.4L794.6 442.1L800.0 440.0L799.4 434.3L798.3 436.0L791.3 431.8ZM754.5 372.8L757.3 364.4L759.2 365.1L756.0 360.0L750.4 362.1L752.3 362.8L749.5 371.2ZM786.8 354.3L795.2 358.5L794.3 360.3L800.0 358.0L798.5 352.1L797.6 353.9L789.2 349.7Z" fill="#2ec488" stroke="#124a34" stroke-width="1"/></g><path d="M787 341L795 332L822 316L829 304L848 308L851 311L888 311L912 321L919 326L917 338L904 348L910 357L888 372L880 385L864 385L853 392L852 411L840 412L836 392L814 388L812 362L813 343L806 337Z" fill="#5e4e12" opacity=".22" filter="url(#pblur)"/><g fill="none" stroke-linecap="round" stroke-linejoin="round"><use href="#p_yellow" stroke="#5e4e12" stroke-width="3"/><use href="#p_yellow" stroke="#8a761e" stroke-width="1.5" transform="translate(-.3,-.4)"/><g stroke="#5e4e12" stroke-width="2.2"><ellipse cx="843.0" cy="322.0" rx="9" ry="3.5"/><ellipse cx="842.7" cy="325.6" rx="9" ry="3.5"/><ellipse cx="842.4" cy="329.1" rx="9" ry="3.5"/><ellipse cx="842.1" cy="332.7" rx="9" ry="3.5"/><ellipse cx="841.9" cy="336.3" rx="9" ry="3.5"/><ellipse cx="841.6" cy="339.9" rx="9" ry="3.5"/><ellipse cx="841.3" cy="343.4" rx="9" ry="3.5"/><ellipse cx="841.0" cy="347.0" rx="9" ry="3.5"/><ellipse cx="840.7" cy="350.6" rx="9" ry="3.5"/><ellipse cx="840.4" cy="354.1" rx="9" ry="3.5"/><ellipse cx="840.1" cy="357.7" rx="9" ry="3.5"/><ellipse cx="839.9" cy="361.3" rx="9" ry="3.5"/><ellipse cx="839.6" cy="364.9" rx="9" ry="3.5"/><ellipse cx="839.3" cy="368.4" rx="9" ry="3.5"/><ellipse cx="839.0" cy="372.0" rx="9" ry="3.5"/><ellipse cx="846.5" cy="390.0" rx="9.5" ry="3.5"/><ellipse cx="846.5" cy="394.0" rx="9.5" ry="3.5"/><ellipse cx="846.5" cy="398.0" rx="9.5" ry="3.5"/><ellipse cx="846.5" cy="402.0" rx="9.5" ry="3.5"/><ellipse cx="846.5" cy="406.0" rx="9.5" ry="3.5"/><ellipse cx="846.5" cy="410.0" rx="9.5" ry="3.5"/><ellipse cx="824.0" cy="362.0" rx="7" ry="3.5"/><ellipse cx="822.9" cy="365.4" rx="7" ry="3.5"/><ellipse cx="821.7" cy="368.9" rx="7" ry="3.5"/><ellipse cx="820.6" cy="372.3" rx="7" ry="3.5"/><ellipse cx="819.4" cy="375.7" rx="7" ry="3.5"/><ellipse cx="818.3" cy="379.1" rx="7" ry="3.5"/><ellipse cx="817.1" cy="382.6" rx="7" ry="3.5"/><ellipse cx="816.0" cy="386.0" rx="7" ry="3.5"/><ellipse cx="866.0" cy="340.0" rx="8" ry="3.5"/><ellipse cx="866.7" cy="343.7" rx="8" ry="3.5"/><ellipse cx="867.3" cy="347.3" rx="8" ry="3.5"/><ellipse cx="868.0" cy="351.0" rx="8" ry="3.5"/><ellipse cx="868.7" cy="354.7" rx="8" ry="3.5"/><ellipse cx="869.3" cy="358.3" rx="8" ry="3.5"/><ellipse cx="870.0" cy="362.0" rx="8" ry="3.5"/></g><path d="M791.4 341.2L815.9 325.8L816.9 327.5L825.0 317.0L812.1 319.7L813.1 321.4L788.6 336.8ZM800.3 336.6L825.5 333.8L825.7 335.8L836.0 330.0L824.7 326.6L824.9 328.6L799.7 331.4ZM851.0 318.4L860.8 322.6L860.0 324.4L866.0 322.0L863.6 316.0L862.8 317.8L853.0 313.6ZM875.5 333.9L879.7 345.8L877.9 346.4L884.0 350.0L886.5 343.4L884.7 344.0L880.5 332.1ZM846.6 387.5L869.0 382.6L869.4 384.6L878.0 378.0L867.4 375.6L867.8 377.6L845.4 382.5ZM890.9 352.4L900.0 356.6L899.2 358.4L905.0 356.0L903.0 350.0L902.2 351.8L893.1 347.6ZM829.6 372.9L833.8 384.1L831.9 384.8L838.0 388.0L840.5 381.6L838.6 382.3L834.4 371.1Z" fill="#dcc030" stroke="#5e4e12" stroke-width="1"/></g><path d="M866 417L872 405L880 392L895 380L908 372L917 340L930 343L949 358L959 367L972 368L967 379L973 392L982 428L982 451L978 460L964 464L949 459L938 466L936 460L911 448L901 435L893 432L872 427Z" fill="#6a4810" opacity=".22" filter="url(#pblur)"/><g fill="none" stroke-linecap="round" stroke-linejoin="round"><use href="#p_orange" stroke="#6a4810" stroke-width="3"/><use href="#p_orange" stroke="#a06c1a" stroke-width="1.5" transform="translate(-.3,-.4)"/><g stroke="#6a4810" stroke-width="2.2"><ellipse cx="868.0" cy="419.0" rx="4" ry="8.5"/><ellipse cx="871.7" cy="418.3" rx="4" ry="8.5"/><ellipse cx="875.4" cy="417.6" rx="4" ry="8.5"/><ellipse cx="879.1" cy="416.9" rx="4" ry="8.5"/><ellipse cx="882.9" cy="416.1" rx="4" ry="8.5"/><ellipse cx="886.6" cy="415.4" rx="4" ry="8.5"/><ellipse cx="890.3" cy="414.7" rx="4" ry="8.5"/><ellipse cx="894.0" cy="414.0" rx="4" ry="8.5"/><ellipse cx="886.0" cy="390.0" rx="4" ry="8"/><ellipse cx="889.5" cy="390.7" rx="4" ry="8"/><ellipse cx="892.9" cy="391.5" rx="4" ry="8"/><ellipse cx="896.4" cy="392.2" rx="4" ry="8"/><ellipse cx="899.8" cy="392.9" rx="4" ry="8"/><ellipse cx="903.3" cy="393.6" rx="4" ry="8"/><ellipse cx="906.7" cy="394.4" rx="4" ry="8"/><ellipse cx="910.2" cy="395.1" rx="4" ry="8"/><ellipse cx="913.6" cy="395.8" rx="4" ry="8"/><ellipse cx="917.1" cy="396.5" rx="4" ry="8"/><ellipse cx="920.5" cy="397.3" rx="4" ry="8"/><ellipse cx="924.0" cy="398.0" rx="4" ry="8"/><ellipse cx="936.0" cy="394.0" rx="4" ry="7.5"/><ellipse cx="939.5" cy="393.3" rx="4" ry="7.5"/><ellipse cx="943.0" cy="392.7" rx="4" ry="7.5"/><ellipse cx="946.5" cy="392.0" rx="4" ry="7.5"/><ellipse cx="950.0" cy="391.3" rx="4" ry="7.5"/><ellipse cx="953.5" cy="390.7" rx="4" ry="7.5"/><ellipse cx="957.0" cy="390.0" rx="4" ry="7.5"/><ellipse cx="895.0" cy="420.0" rx="6" ry="4"/><ellipse cx="897.4" cy="422.9" rx="6" ry="4"/><ellipse cx="899.9" cy="425.7" rx="6" ry="4"/><ellipse cx="902.3" cy="428.6" rx="6" ry="4"/><ellipse cx="904.7" cy="431.4" rx="6" ry="4"/><ellipse cx="907.1" cy="434.3" rx="6" ry="4"/><ellipse cx="909.6" cy="437.1" rx="6" ry="4"/><ellipse cx="912.0" cy="440.0" rx="6" ry="4"/></g><path d="M931.6 352.9L938.6 372.5L936.7 373.1L944.0 380.0L945.3 370.1L943.4 370.7L936.4 351.1ZM946.2 363.8L953.2 370.8L951.7 372.3L958.0 372.0L958.3 365.7L956.8 367.2L949.8 360.2ZM904.2 437.5L932.2 446.6L931.6 448.5L945.0 448.0L934.4 439.7L933.8 441.6L905.8 432.5ZM919.6 442.6L947.6 446.8L947.3 448.7L960.0 446.0L948.7 439.7L948.4 441.6L920.4 437.4ZM957.5 400.7L961.7 414.7L959.8 415.3L966.0 420.0L968.6 412.7L966.7 413.3L962.5 399.3ZM972.5 432.6L975.3 443.8L973.3 444.3L979.0 448.0L982.3 442.1L980.3 442.6L977.5 431.4ZM941.3 460.2L948.3 456.0L949.4 457.7L950.0 452.0L944.6 449.9L945.7 451.6L938.7 455.8Z" fill="#e89a2c" stroke="#6a4810" stroke-width="1"/></g><path d="M858 446L872 441L884 452L891 444L904 443L908 459L922 465L917 486L940 482L952 478L962 465L959 480L951 505L943 512L952 522L930 528L901 536L895 550L877 556L869 554L859 544L864 530L853 531L843 523L851 518L850 494L855 475Z" fill="#5c1010" opacity=".22" filter="url(#pblur)"/><g fill="none" stroke-linecap="round" stroke-linejoin="round"><use href="#p_red" stroke="#5c1010" stroke-width="3"/><use href="#p_red" stroke="#9a1c1c" stroke-width="1.5" transform="translate(-.3,-.4)"/><g stroke="#5c1010" stroke-width="2.2"><ellipse cx="861.0" cy="447.0" rx="5" ry="8"/><ellipse cx="864.0" cy="449.1" rx="5" ry="8"/><ellipse cx="867.0" cy="451.3" rx="5" ry="8"/><ellipse cx="870.0" cy="453.4" rx="5" ry="8"/><ellipse cx="873.0" cy="455.6" rx="5" ry="8"/><ellipse cx="876.0" cy="457.7" rx="5" ry="8"/><ellipse cx="879.0" cy="459.9" rx="5" ry="8"/><ellipse cx="882.0" cy="462.0" rx="5" ry="8"/><ellipse cx="896.0" cy="446.0" rx="9" ry="3.5"/><ellipse cx="896.3" cy="449.6" rx="9" ry="3.5"/><ellipse cx="896.7" cy="453.1" rx="9" ry="3.5"/><ellipse cx="897.0" cy="456.7" rx="9" ry="3.5"/><ellipse cx="897.3" cy="460.2" rx="9" ry="3.5"/><ellipse cx="897.7" cy="463.8" rx="9" ry="3.5"/><ellipse cx="898.0" cy="467.3" rx="9" ry="3.5"/><ellipse cx="898.3" cy="470.9" rx="9" ry="3.5"/><ellipse cx="898.7" cy="474.4" rx="9" ry="3.5"/><ellipse cx="899.0" cy="478.0" rx="9" ry="3.5"/><ellipse cx="893.0" cy="500.0" rx="4" ry="7.5"/><ellipse cx="896.4" cy="501.1" rx="4" ry="7.5"/><ellipse cx="899.9" cy="502.3" rx="4" ry="7.5"/><ellipse cx="903.3" cy="503.4" rx="4" ry="7.5"/><ellipse cx="906.7" cy="504.6" rx="4" ry="7.5"/><ellipse cx="910.1" cy="505.7" rx="4" ry="7.5"/><ellipse cx="913.6" cy="506.9" rx="4" ry="7.5"/><ellipse cx="917.0" cy="508.0" rx="4" ry="7.5"/></g><path d="M890.8 456.4L899.9 471.1L898.2 472.1L906.0 476.0L906.0 467.3L904.3 468.3L895.2 453.6ZM874.0 479.6L879.6 486.6L878.0 487.9L884.0 488.0L885.2 482.1L883.6 483.4L878.0 476.4ZM950.4 495.1L957.4 479.7L959.2 480.5L958.0 472.0L950.8 476.7L952.6 477.5L945.6 492.9ZM900.8 522.5L921.8 515.5L922.5 517.4L930.0 510.0L919.5 508.6L920.2 510.5L899.2 517.5ZM868.6 532.5L891.0 526.9L891.5 528.9L900.0 522.0L889.3 519.9L889.8 521.9L867.4 527.5ZM841.6 524.2L850.7 529.8L849.7 531.5L856.0 530.0L854.5 523.7L853.5 525.4L844.4 519.8ZM878.8 542.3L890.0 547.9L889.1 549.7L896.0 548.0L893.3 541.5L892.4 543.3L881.2 537.7ZM910.7 492.3L923.3 499.3L922.4 501.0L930.0 500.0L926.8 493.0L925.9 494.7L913.3 487.7Z" fill="#e03434" stroke="#5c1010" stroke-width="1"/></g><path d="M826 449L839 452L837 467L848 481L847 489L839 494L839 509L822 512L829 525L831 538L852 548L839 550L806 547L797 556L794 544L778 530L750 509L739 492L745 476L752 464L758 456L781 456L800 457L819 462Z" fill="#18343e" opacity=".22" filter="url(#pblur)"/><g fill="none" stroke-linecap="round" stroke-linejoin="round"><use href="#p_teal" stroke="#18343e" stroke-width="3"/><use href="#p_teal" stroke="#2c5c68" stroke-width="1.5" transform="translate(-.3,-.4)"/><g stroke="#18343e" stroke-width="2.2"><ellipse cx="833.0" cy="450.0" rx="9" ry="3.5"/><ellipse cx="831.9" cy="453.4" rx="9" ry="3.5"/><ellipse cx="830.7" cy="456.9" rx="9" ry="3.5"/><ellipse cx="829.6" cy="460.3" rx="9" ry="3.5"/><ellipse cx="828.4" cy="463.7" rx="9" ry="3.5"/><ellipse cx="827.3" cy="467.1" rx="9" ry="3.5"/><ellipse cx="826.1" cy="470.6" rx="9" ry="3.5"/><ellipse cx="825.0" cy="474.0" rx="9" ry="3.5"/><ellipse cx="846.0" cy="485.0" rx="4" ry="8"/><ellipse cx="842.7" cy="486.0" rx="4" ry="8"/><ellipse cx="839.5" cy="487.0" rx="4" ry="8"/><ellipse cx="836.2" cy="488.0" rx="4" ry="8"/><ellipse cx="832.9" cy="489.0" rx="4" ry="8"/><ellipse cx="829.6" cy="490.0" rx="4" ry="8"/><ellipse cx="826.4" cy="491.0" rx="4" ry="8"/><ellipse cx="823.1" cy="492.0" rx="4" ry="8"/><ellipse cx="819.8" cy="493.0" rx="4" ry="8"/><ellipse cx="816.5" cy="494.0" rx="4" ry="8"/><ellipse cx="813.3" cy="495.0" rx="4" ry="8"/><ellipse cx="810.0" cy="496.0" rx="4" ry="8"/><ellipse cx="793.6" cy="494.0" rx="9" ry="3.5"/><ellipse cx="793.6" cy="497.4" rx="9" ry="3.5"/><ellipse cx="793.6" cy="500.9" rx="9" ry="3.5"/><ellipse cx="793.6" cy="504.3" rx="9" ry="3.5"/><ellipse cx="793.6" cy="507.7" rx="9" ry="3.5"/><ellipse cx="793.6" cy="511.1" rx="9" ry="3.5"/><ellipse cx="793.6" cy="514.6" rx="9" ry="3.5"/><ellipse cx="793.6" cy="518.0" rx="9" ry="3.5"/></g><path d="M803.7 471.2L807.9 479.6L806.1 480.5L812.0 482.0L814.3 476.3L812.5 477.2L808.3 468.8ZM824.7 487.2L833.1 492.1L832.1 493.9L838.0 492.0L836.7 485.9L835.7 487.7L827.3 482.8ZM757.2 464.3L762.8 461.5L763.7 463.3L764.0 458.0L759.5 455.1L760.4 456.9L754.8 459.7ZM767.8 506.3L776.2 520.3L774.5 521.4L782.0 525.0L782.3 516.6L780.6 517.7L772.2 503.7ZM798.5 532.1L813.9 542.6L812.8 544.3L822.0 545.0L818.0 536.7L816.9 538.4L801.5 527.9ZM807.8 547.6L837.2 549.7L837.1 551.7L850.0 548.0L837.7 542.5L837.6 544.5L808.2 542.4ZM750.8 497.3L757.8 500.8L756.9 502.6L762.0 500.0L761.1 494.4L760.2 496.2L753.2 492.7ZM777.5 469.5L773.3 490.5L771.3 490.1L774.0 500.0L780.3 491.9L778.3 491.5L782.5 470.5Z" fill="#5aaaba" stroke="#18343e" stroke-width="1"/></g><circle cx="847" cy="430.500" r="10" fill="url(#pur)"/></svg>
<!-- VIEWPORT BOTTOM TOOLBAR + NAV CUBE -->
<div class="a" style="left:592.8px;top:637.3px;width:494px;height:31.5px;background:#2e3e53;border-radius:5px"></div>
<svg style="left:595.0px;top:640.0px" width="26" height="26" viewBox="0 0 26 26"><rect x="1" y="1" width="24" height="24" fill="#253447" stroke="#a9c8ee" stroke-width="1.300"/><g transform="translate(3.500,3.500) scale(1.050)"><use href="#mag"/></g></svg>
<svg style="left:628.0px;top:640.0px" width="26" height="26" viewBox="0 0 26 26"><path d="M1 8 V1 H8 M18 1 H25 V8 M25 18 V25 H18 M8 25 H1 V18" fill="none" stroke="#a9c8ee" stroke-width="1.500"/><g transform="translate(3.500,3.500) scale(1.050)"><use href="#mag"/></g></svg>
<svg style="left:662.0px;top:640.0px" width="26" height="26" viewBox="0 0 26 26"><g transform="translate(3,3) scale(1.100)"><use href="#mag"/><path d="M4.500 7.500 H10.500 M7.500 4.500 V10.500" stroke="#fff" stroke-width="1.600"/></g></svg>
<svg style="left:695.0px;top:640.0px" width="26" height="26" viewBox="0 0 26 26"><g transform="translate(3,3) scale(1.100)"><use href="#mag"/><path d="M4.500 7.500 H10.500" stroke="#fff" stroke-width="1.600"/></g></svg>
<svg style="left:727.2px;top:640.0px" width="26" height="26" viewBox="0 0 26 26"><rect x="1.500" y="2" width="23" height="22" rx="2" fill="url(#bgg)" stroke="#1b2636" stroke-width="1.200"/></svg>
<div class="a" style="left:757.9px;top:638.2px;width:31px;height:29.5px;background:#43587a"></div>
<svg style="left:760.4px;top:640.0px" width="26" height="26" viewBox="0 0 26 26"><path d="M13 1 L24 6.500 V19 L13 25 L2 19 V6.500 Z" fill="#5e8cc8" stroke="#3f5f8c" stroke-width="1"/><path d="M13 1 L24 6.500 L13 12 L2 6.500 Z" fill="#7aa8e0"/><path d="M13 12 V25 L24 19 V6.500 Z" fill="#4f7cb8"/><path d="M6 10 L11 13 V19 L6 16 Z" fill="#2e4668"/><path d="M20 10 L15 13 V19 L20 16 Z" fill="#2e4668"/><path d="M13 3 L15 6 H11 Z" fill="#4a8fe8"/><path d="M2 22 L6 19" stroke="#f07040" stroke-width="2"/><path d="M24 22 L20 19" stroke="#40d080" stroke-width="2"/></svg>
<svg style="left:793.3px;top:640.0px" width="26" height="26" viewBox="0 0 26 26"><path d="M5 3 H21 L24 22 H2 Z" fill="#9fb4cf" stroke="#53678a" stroke-width="1"/><path d="M13 3 V22 M3.500 12 H22.500" stroke="#c9d6c0" stroke-width="1"/><path d="M9 3 L7.500 22 M17 3 L18.500 22 M4.300 7.500 H21.700 M2.800 17 H23.200" stroke="#8aa0c0" stroke-width=".6"/></svg>
<div class="t" style="left:829px;letter-spacing:-0.40px;transform:scaleX(0.932);transform-origin:0 0;top:643.5px;font-size:17px;color:#fff;font-weight:bold;line-height:20px;height:20px;margin-top:-2px">1Å</div>
<div class="a" style="left:828.5px;top:661.5px;width:20.5px;height:2px;background:#fff"></div>
<svg style="left:859.0px;top:640.0px" width="26" height="26" viewBox="0 0 26 26"><g transform="translate(7.500,2) scale(.8)"><use href="#cam"/></g><ellipse cx="13" cy="18" rx="10" ry="4.600" fill="none" stroke="#1b2636" stroke-width="3.400"/><ellipse cx="13" cy="18" rx="10" ry="4.600" fill="none" stroke="#fff" stroke-width="1.800"/><path d="M11 20.500 L15 22.800 L11.500 24.800 Z" fill="#fff"/></svg>
<svg style="left:892.0px;top:640.0px" width="26" height="26" viewBox="0 0 26 26"><g transform="translate(1,3) scale(1.300)"><path d="M1 3 H4 L5 1 H9 L10 3 H13 V10.500 H1 Z" fill="#6f9bd8" stroke="#1b2636" stroke-width="1"/><circle cx="6" cy="6.500" r="2.700" fill="#e4e0dc" stroke="#1b2636" stroke-width="1.300"/></g><g transform="translate(11,10) scale(.62)"><use href="#flop"/></g></svg>
<svg style="left:925.0px;top:640.0px" width="26" height="26" viewBox="0 0 26 26"><rect x="9" y="3" width="15" height="13" fill="#a9c8ee" stroke="#5d7ca8" stroke-width="1"/><path d="M11.500 6.500 H21.500 M11.500 9.500 H21.500 M11.500 12.500 H21.500" stroke="#5d86bf" stroke-width="1.200"/><circle cx="4.500" cy="20.500" r="3" fill="#d8d4d8" stroke="#8a8f9c" stroke-width=".8"/></svg>
<svg style="left:958.0px;top:640.0px" width="26" height="26" viewBox="0 0 26 26"><rect x="2.500" y="3.500" width="21" height="18.500" fill="#a9c8ee" stroke="#6f8fbb" stroke-width="1"/><rect x="4.500" y="8" width="17" height="7" fill="#5d86bf"/><path d="M4.500 18.500 H21.500" stroke="#5d86bf" stroke-width="1"/></svg>
<svg style="left:990.7px;top:640.0px" width="26" height="26" viewBox="0 0 26 26"><path d="M3 13 C7 6 19 6 23 13 C19 20 7 20 3 13 Z" fill="#fff"/><circle cx="13" cy="13" r="4.300" fill="#2e3e53"/><circle cx="13" cy="13" r="2" fill="#fff"/></svg>
<svg style="left:1023.8px;top:640.0px" width="26" height="26" viewBox="0 0 26 26"><g fill="#a9c8ee"><path d="M5 5 H11.500 L9.500 7 L12.500 10 L10 12.500 L7 9.500 L5 11.500 Z"/><path d="M21 5 H14.500 L16.500 7 L13.500 10 L16 12.500 L19 9.500 L21 11.500 Z"/><path d="M5 21 H11.500 L9.500 19 L12.500 16 L10 13.500 L7 16.500 L5 14.500 Z"/><path d="M21 21 H14.500 L16.500 19 L13.500 16 L16 13.500 L19 16.500 L21 14.500 Z"/></g></svg>
<svg style="left:1056.5px;top:640.0px" width="26" height="26" viewBox="0 0 26 26"><path d="M6.500 5 V21 L20 13 Z" fill="#fff" stroke="#1b2636" stroke-width="1" stroke-linejoin="round"/></svg>
<svg style="left:295px;top:525px" width="145" height="150" viewBox="0 0 145 150"><g fill="#6386b6" opacity=".85"><path d="M72.600 5 L78 14.100 H67.300 Z"/><path d="M72.600 145.300 L67.300 136.200 H78 Z"/><path d="M3 75 L13 69.400 V80.500 Z"/><path d="M142.900 75 L133.700 80.500 V69.400 Z"/></g>
<g fill="none" stroke="#6386b6" stroke-width="3.600" opacity=".85"><path d="M55.600 11.600 Q41 15 31.500 24"/><path d="M89.700 11.200 Q104 15 113.800 24"/></g>
<g fill="#6386b6" opacity=".85"><path d="M24.500 29.500 L28 19.500 L36.500 27.500 Z"/><path d="M121.500 29.500 L117.500 19.500 L109.500 27.500 Z"/></g><path d="M32.4 74.7C32.0 67.9 31.0 61.2 39.0 55.6C47.0 50.0 74.9 39.3 84.7 38.2C94.5 37.1 98.6 42.8 103.0 48.2C107.4 53.6 112.1 66.6 113.0 73.0C113.9 79.4 116.9 83.8 108.8 89.7C100.7 95.6 71.0 109.8 60.6 111.3C50.2 112.8 45.8 105.3 41.5 99.7C37.2 94.1 32.8 81.5 32.4 74.7Z" fill="#9cbce6" stroke="#6a8ebf" stroke-width="1" opacity=".55"/><path d="M34.0 71.4C34.2 66.0 38.0 64.6 41.5 63.1C45.0 61.6 53.0 60.6 56.5 61.4C60.0 62.2 61.7 63.0 64.0 68.1C66.3 73.2 71.0 89.8 71.4 94.7C71.8 99.6 70.0 98.0 66.4 99.7C62.8 101.4 52.3 105.8 48.2 105.5C44.1 105.2 42.1 103.2 39.9 98.0C37.7 92.8 33.8 76.8 34.0 71.4Z" fill="#5f86bc" /><path d="M77.2 56.5C77.5 51.4 82.9 49.9 86.4 48.2C89.9 46.5 96.6 45.2 99.7 45.7C102.8 46.2 104.3 47.3 106.3 51.5C108.3 55.7 112.7 68.2 113.0 73.0C113.3 77.8 110.8 80.6 108.0 83.0C105.2 85.4 98.3 89.1 94.7 88.9C91.1 88.7 87.4 86.4 84.7 81.4C82.0 76.4 76.9 61.6 77.2 56.5Z" fill="#31496a" /><path d="M54.0 55.6C55.0 53.2 68.2 48.2 71.4 47.3C74.6 46.4 74.8 47.6 74.8 49.8C74.8 52.0 72.9 59.4 71.4 61.4C69.9 63.4 67.5 64.0 64.8 63.1C62.1 62.2 53.0 58.0 54.0 55.6Z" fill="#6e9ad4" /><path d="M71.4 101.3C71.9 98.7 76.2 89.4 78.0 87.2C79.8 85.0 80.8 85.9 83.0 87.2C85.2 88.5 91.2 93.7 92.2 95.5C93.2 97.3 92.4 97.5 89.7 98.8C87.0 100.1 77.6 103.4 74.8 103.8C72.0 104.2 70.9 103.9 71.4 101.3Z" fill="#4a6f9e" /><path d="M62.7 43.9L59.1 34.3L62.3 33.1L54.8 27.9L52.6 36.8L55.9 35.5L59.5 45.1Z" fill="#46cc62"/><path d="M96.6 68.0L104.6 64.9L105.9 68.2L111.0 60.6L102.1 58.5L103.4 61.7L95.4 64.8Z" fill="#f5853f"/><path d="M51.9 83.8L43.9 85.6L43.1 82.2L36.9 88.9L45.3 92.4L44.6 88.9L52.7 87.2Z" fill="#3f86ea"/></svg>
<!-- ANIMATOR -->
<div class="a" style="left:0px;top:675px;width:1383px;height:4px;background:#2b394c"></div>
<div class="a" style="left:0px;top:679px;width:1383px;height:31px;background:#435a78"></div>
<svg style="left:2px;top:683px" width="26" height="23" viewBox="0 0 26 23"><path d="M.6 10.500 H25.400 V22 H.6 Z" fill="#a9c8ee" stroke="#1b2636" stroke-width="1.100"/><path d="M.6 4.200 L25.200 .5 V3.800 L.6 7.400 Z" fill="#dfe8f3" stroke="#1b2636" stroke-width=".9"/><path d="M.6 7.400 H25.400 V10.800 H.6 Z" fill="#dfe8f3" stroke="#1b2636" stroke-width=".9"/><path d="M10.500 12.800 V19.800 L16.500 16.300 Z" fill="#fff" stroke="#1b2636" stroke-width=".9"/></svg>
<div class="t" style="left:40px;letter-spacing:-0.34px;top:688px;color:#fff;font-weight:bold">Animator - Presentation 1</div>
<svg style="left:1342px;top:688px" width="32" height="12" viewBox="0 0 32 12"><use href="#pinx"/></svg>
<div class="a" style="left:4px;top:710px;width:981px;height:57px;background:#1e2a3b"></div>
<svg style="left:20px;top:714px" width="20" height="20" viewBox="0 0 20 20"><path d="M4.300 1.500 V19 M9.900 1.500 V19 M15.200 1.500 V19 M1 3.900 H20 M1 9.900 H20 M1 15.200 H20" stroke="#dfe6ef" stroke-width="1.200"/><path d="M6 .8 C1 3 0.500 8 3.500 9.800 C6.500 11.200 9 8.500 10.500 5.500" fill="none" stroke="#1b2636" stroke-width="3.400"/><path d="M6 .8 C1 3 0.500 8 3.500 9.800 C6.500 11.200 9 8.500 10.500 5.500" fill="none" stroke="#b8d2f0" stroke-width="1.900"/></svg>
<div class="t" style="left:43.4px;letter-spacing:-0.05px;top:716.6px;color:#eef2f8">Off</div>
<svg style="left:77px;top:725.3px" width="9.5" height="4.5" viewBox="0 0 9.5 4.5"><path d="M0 0 H9.500 L4.750 4.500 Z" fill="#fff"/></svg>
<svg style="left:95px;top:714px" width="21" height="20" viewBox="0 0 21 20"><path d="M2 18.500 L14.500 6 Q19.500 11 20 18.500 Z" fill="#bccbe0" stroke="#1b2636" stroke-width=".8"/><path d="M1.500 18.600 H20.500" stroke="#8fa3bd" stroke-width="1.400"/><path d="M7.400 .8 C3.500 3.500 2 7.500 4 10 C6.500 12.500 10.500 10.500 12.300 5.700" fill="none" stroke="#1b2636" stroke-width="3.600"/><path d="M7.400 .8 C3.500 3.500 2 7.500 4 10 C6.500 12.500 10.500 10.500 12.300 5.700" fill="none" stroke="#b8d2f0" stroke-width="2"/></svg>
<div class="t" style="left:119.3px;letter-spacing:0.09px;top:716.6px;color:#eef2f8">Off</div>
<svg style="left:152.7px;top:725.3px" width="9.5" height="4.5" viewBox="0 0 9.5 4.5"><path d="M0 0 H9.500 L4.750 4.500 Z" fill="#fff"/></svg>
<svg style="left:179.5px;top:714px" width="21" height="19.5" viewBox="0 0 21 19.5"><path d="M1 8 H20 V19 H1 Z" fill="#a9c8ee" stroke="#1b2636" stroke-width="1"/><path d="M1 4.500 L20 1.500 V4.500 L1 7.500 Z" fill="#dfe8f3" stroke="#1b2636" stroke-width="1"/><path d="M1 7.500 H20 V10.500 H1 Z" fill="#dfe8f3" stroke="#1b2636" stroke-width="1"/><path d="M8.500 12 V17.500 L13 14.700 Z" fill="#fff" stroke="#1b2636" stroke-width=".8"/><path d="M11.500 0 V8 M7.500 4 H15.500" stroke="#1b2636" stroke-width="3.600"/><path d="M11.500 .5 V7.500 M8 4 H15" stroke="#fff" stroke-width="1.800"/></svg>
<div class="a" style="left:213px;top:711.5px;width:77px;height:24px;background:#fff"></div>
<div class="t" style="left:217.2px;letter-spacing:-0.40px;transform:scaleX(1.000);transform-origin:0 0;top:716px;color:#111">Loop</div>
<svg style="left:266px;top:719.3px" width="12" height="9.6" viewBox="0 0 13.5 10"><use href="#tri"/></svg>
<div class="a" style="left:290px;top:711.5px;width:84.2px;height:24px;background:#4a76a9"></div>
<div class="a" style="left:374.2px;top:711.5px;width:50px;height:24px;background:#fff"></div>
<div class="a" style="left:424.2px;top:711.5px;width:83.3px;height:24px;background:#4a76a9"></div>
<div class="a" style="left:507.5px;top:711.5px;width:61px;height:24px;background:#fff"></div>
<div class="t" style="left:391px;top:716px;color:#111">1</div>
<svg style="left:298.45px;top:717.7px" width="10.5" height="10" viewBox="0 0 10.5 10"><path d="M1 0 V10" stroke="#fff" stroke-width="1.800"/><path d="M9.500 0 V10 L2 5 Z" fill="#fff" stroke="#1b2636" stroke-width=".8"/></svg>
<svg style="left:326.75px;top:717.7px" width="10.5" height="10" viewBox="0 0 10.5 10"><path d="M9 .5 L1.500 5 L9 9.500" fill="none" stroke="#1b2636" stroke-width="3"/><path d="M9 .5 L1.500 5 L9 9.500" fill="none" stroke="#fff" stroke-width="1.500"/></svg>
<svg style="left:354.75px;top:717.7px" width="10.5" height="10" viewBox="0 0 10.5 10"><path d="M9 0 V10 L1 5 Z" fill="#fff" stroke="#1b2636" stroke-width=".8"/></svg>
<svg style="left:432.25px;top:717.7px" width="10.5" height="10" viewBox="0 0 10.5 10"><path d="M1.500 0 V10 L9.500 5 Z" fill="#fff" stroke="#1b2636" stroke-width=".8"/></svg>
<svg style="left:460.45px;top:717.7px" width="10.5" height="10" viewBox="0 0 10.5 10"><path d="M1.500 .5 L9 5 L1.500 9.500" fill="none" stroke="#1b2636" stroke-width="3"/><path d="M1.500 .5 L9 5 L1.500 9.500" fill="none" stroke="#fff" stroke-width="1.500"/></svg>
<svg style="left:487.55px;top:717.7px" width="10.5" height="10" viewBox="0 0 10.5 10"><path d="M9.500 0 V10" stroke="#fff" stroke-width="1.800"/><path d="M1 0 V10 L8.500 5 Z" fill="#fff" stroke="#1b2636" stroke-width=".8"/></svg>
<div class="t" style="left:513.8px;letter-spacing:-0.40px;transform:scaleX(0.935);transform-origin:0 0;top:716px;color:#111">0,030 s</div>
<div class="a" style="left:567.3px;top:711.5px;width:19.7px;height:24px;background:#fff"></div>
<div class="a" style="left:568.3px;top:712.5px;width:17.7px;height:10.5px;background:#4a76a9"></div>
<div class="a" style="left:568.3px;top:724px;width:17.7px;height:10.5px;background:#4a76a9"></div>
<svg style="left:572.8px;top:714.5px" width="9" height="6" viewBox="0 0 9 6"><path d="M0 6 H9 L4.500 0 Z" fill="#fff"/></svg>
<svg style="left:572.8px;top:726.5px" width="9" height="6" viewBox="0 0 9 6"><path d="M0 0 H9 L4.500 6 Z" fill="#fff"/></svg>
<svg style="left:599px;top:713px" width="23" height="22" viewBox="0 0 23 22"><rect x=".6" y=".6" width="20" height="14" fill="#a9c8ee" stroke="#1b2636" stroke-width="1"/><path d="M.6 3.500 H20.600 M.6 11.600 H20.600 M5.500 .6 V3.500 M10.500 .6 V3.500 M15.500 .6 V3.500 M5.500 11.600 V14.600 M10.500 11.600 V14.600" stroke="#1b2636" stroke-width=".9"/><path d="M8.500 5 V10 L12.500 7.500 Z" fill="#fff" stroke="#1b2636" stroke-width=".7"/><rect x="12.500" y="12" width="9.500" height="9.500" fill="#a9c8ee" stroke="#1b2636" stroke-width="1"/><path d="M15 19.500 L20 14.500" stroke="#1b2636" stroke-width="1.600"/></svg>
<svg style="left:635px;top:713.8px" width="21.7" height="21.5" viewBox="0 0 21.7 21.5"><rect x=".6" y=".6" width="20.500" height="20.300" fill="#253447" stroke="#a9c8ee" stroke-width="1.200"/><g transform="translate(2.500,2.500) scale(.9)"><use href="#mag"/></g></svg>
<svg style="left:662.5px;top:715px" width="19" height="19" viewBox="0 0 19 19"><use href="#mag"/><path d="M5 7.500 H10 M7.500 5 V10" stroke="#fff" stroke-width="1.400"/></svg>
<svg style="left:689px;top:715px" width="19" height="19" viewBox="0 0 19 19"><use href="#mag"/><path d="M5 7.500 H10" stroke="#fff" stroke-width="1.400"/></svg>
<div class="t" style="left:721.4px;letter-spacing:-0.40px;transform:scaleX(0.978);transform-origin:0 0;top:717px;color:#eef2f8">Begin</div>
<div class="a" style="left:760.8px;top:711.5px;width:49.5px;height:24px;background:#fff"></div>
<div class="t" style="left:795.5px;top:716px;color:#111">1</div>
<div class="a" style="left:809.3px;top:711.5px;width:19.7px;height:24px;background:#fff"></div>
<div class="a" style="left:810.3px;top:712.5px;width:17.7px;height:10.5px;background:#4a76a9"></div>
<div class="a" style="left:810.3px;top:724px;width:17.7px;height:10.5px;background:#4a76a9"></div>
<svg style="left:814.8px;top:714.5px" width="9" height="6" viewBox="0 0 9 6"><path d="M0 6 H9 L4.500 0 Z" fill="#fff"/></svg>
<svg style="left:814.8px;top:726.5px" width="9" height="6" viewBox="0 0 9 6"><path d="M0 0 H9 L4.500 6 Z" fill="#fff"/></svg>
<div class="t" style="left:839px;letter-spacing:-0.40px;transform:scaleX(0.894);transform-origin:0 0;top:717px;color:#eef2f8">End</div>
<div class="a" style="left:868.7px;top:711.5px;width:49.5px;height:24px;background:#fff"></div>
<div class="t" style="left:896px;letter-spacing:-0.10px;top:716px;color:#111">60</div>
<div class="a" style="left:917.2px;top:711.5px;width:19.7px;height:24px;background:#fff"></div>
<div class="a" style="left:918.2px;top:712.5px;width:17.7px;height:10.5px;background:#4a76a9"></div>
<div class="a" style="left:918.2px;top:724px;width:17.7px;height:10.5px;background:#4a76a9"></div>
<svg style="left:922.7px;top:714.5px" width="9" height="6" viewBox="0 0 9 6"><path d="M0 6 H9 L4.500 0 Z" fill="#fff"/></svg>
<svg style="left:922.7px;top:726.5px" width="9" height="6" viewBox="0 0 9 6"><path d="M0 0 H9 L4.500 6 Z" fill="#fff"/></svg>
<svg style="left:949px;top:713px" width="22" height="22" viewBox="0 0 22 22"><g fill="none"><circle cx="11" cy="11" r="8.300" stroke="#5d6f88" stroke-width="4.400" stroke-dasharray="3.260 3.260" transform="rotate(-11 11 11)"/><circle cx="11" cy="11" r="6" stroke="#5d6f88" stroke-width="4.600"/><circle cx="11" cy="11" r="8.300" stroke="#f0f3f8" stroke-width="3.400" stroke-dasharray="2.760 3.760" stroke-dashoffset="-.25" transform="rotate(-11 11 11)"/><circle cx="11" cy="11" r="6" stroke="#f0f3f8" stroke-width="3.600"/><circle cx="11" cy="11" r="2.700" stroke="#a9c8ee" stroke-width="1.300"/></g></svg>
<div class="t" style="left:91.9px;letter-spacing:-0.40px;transform:scaleX(0.935);transform-origin:0 0;top:745.4px;font-size:12px;color:#c3ccd8">-10</div>
<div class="t" style="left:209.5px;top:745.4px;font-size:12px;color:#c3ccd8">0</div>
<div class="t" style="left:321.5px;letter-spacing:-0.17px;top:745.4px;font-size:12px;color:#c3ccd8">10</div>
<div class="t" style="left:436.5px;letter-spacing:-0.17px;top:745.4px;font-size:12px;color:#c3ccd8">20</div>
<div class="t" style="left:551.5px;letter-spacing:-0.17px;top:745.4px;font-size:12px;color:#c3ccd8">30</div>
<div class="t" style="left:666.5px;letter-spacing:-0.17px;top:745.4px;font-size:12px;color:#c3ccd8">40</div>
<div class="t" style="left:781.5px;letter-spacing:-0.17px;top:745.4px;font-size:12px;color:#c3ccd8">50</div>
<div class="t" style="left:896.5px;letter-spacing:-0.17px;top:745.4px;font-size:12px;color:#c3ccd8">60</div>
<div class="a" style="left:4px;top:767px;width:961px;height:145px;background:#202e41"></div>
<div class="a" style="left:224px;top:767px;width:679px;height:145px;background:#323f52"></div>
<div class="a" style="left:224px;top:767px;width:679px;height:19px;background:#344154"></div>
<div class="a" style="left:224px;top:807px;width:679px;height:20px;background:#344154"></div>
<div class="a" style="left:224px;top:848px;width:679px;height:20px;background:#344154"></div>
<div class="a" style="left:224px;top:889px;width:679px;height:20px;background:#344154"></div>
<div class="a" style="left:270px;top:767px;width:1px;height:145px;background:#2c3a4d"></div>
<div class="a" style="left:386px;top:767px;width:1px;height:145px;background:#2c3a4d"></div>
<div class="a" style="left:500px;top:767px;width:1px;height:145px;background:#2c3a4d"></div>
<div class="a" style="left:616px;top:767px;width:1px;height:145px;background:#2c3a4d"></div>
<div class="a" style="left:730px;top:767px;width:1px;height:145px;background:#2c3a4d"></div>
<div class="a" style="left:846px;top:767px;width:1px;height:145px;background:#2c3a4d"></div>
<div class="a" style="left:327px;top:767px;width:2px;height:145px;background:#1f2b3c"></div>
<div class="a" style="left:442px;top:767px;width:2px;height:145px;background:#1f2b3c"></div>
<div class="a" style="left:557px;top:767px;width:2px;height:145px;background:#1f2b3c"></div>
<div class="a" style="left:672px;top:767px;width:2px;height:145px;background:#1f2b3c"></div>
<div class="a" style="left:787px;top:767px;width:2px;height:145px;background:#1f2b3c"></div>
<div class="a" style="left:902px;top:767px;width:2px;height:145px;background:#1f2b3c"></div>
<div class="a" style="left:223.5px;top:767px;width:2px;height:145px;background:#4a76a9"></div>
<div class="a" style="left:214.8px;top:738.5px;width:21.5px;height:28.5px;background:#4a76a9;border-radius:4px"></div>
<div class="t" style="left:221.5px;top:745.4px;color:#fff">1</div>
<div class="a" style="left:964px;top:738px;width:21px;height:195px;background:#1e2a3b"></div>
<div class="a" style="left:964.8px;top:739.5px;width:18px;height:15.5px;background:#4a76a9"></div>
<svg style="left:968.3px;top:743px" width="11" height="8" viewBox="0 0 11 8"><path d="M0 8 H11 L5.500 0 Z" fill="#fff"/></svg>
<div class="a" style="left:964.8px;top:758px;width:18px;height:17px;background:#4a76a9"></div>
<div class="a" style="left:964.8px;top:894.5px;width:18px;height:16.5px;background:#4a76a9"></div>
<svg style="left:968.3px;top:899px" width="11" height="8" viewBox="0 0 11 8"><path d="M0 0 H11 L5.500 8 Z" fill="#fff"/></svg>
<div class="a" style="left:4px;top:912px;width:961px;height:21px;background:#1e2a3b"></div>
<div class="a" style="left:4.5px;top:914.5px;width:19px;height:18.5px;background:#4a76a9"></div>
<svg style="left:10px;top:918px" width="8" height="11" viewBox="0 0 8 11"><path d="M8 0 V11 L0 5.500 Z" fill="#fff"/></svg>
<div class="a" style="left:408px;top:914.5px;width:148.5px;height:18.5px;background:#4a76a9"></div>
<div class="a" style="left:945px;top:914.5px;width:18px;height:18.5px;background:#4a76a9"></div>
<svg style="left:950.5px;top:918px" width="8" height="11" viewBox="0 0 8 11"><path d="M0 0 V11 L8 5.500 Z" fill="#fff"/></svg>
<div class="a" style="left:985px;top:710px;width:3px;height:223px;background:#3a4d68"></div>
<!-- ANIMATION LIBRARY -->
<div class="a" style="left:988px;top:710px;width:395px;height:223px;background:#303e52"></div>
<div class="a" style="left:994.6px;top:718px;width:19px;height:19px;background:#a9c8ee;border:1px solid #1b2636"></div>
<div class="t" style="left:996.8px;letter-spacing:-0.38px;top:719.5px;font-size:9.5px;color:#1b2636;font-weight:bold">A-Z</div>
<svg style="left:1021px;top:717px" width="21" height="21" viewBox="0 0 21 21"><g transform="translate(4,3) scale(.55)"><use href="#np"/></g><g transform="translate(11,0) scale(.75)"><use href="#at"/></g><g transform="translate(0,11) scale(.75)"><use href="#at"/></g></svg>
<svg style="left:1047px;top:720px" width="19" height="15" viewBox="0 0 19 15"><path d="M1 3.500 H5 L6.500 1 H12.500 L14 3.500 H18 V14 H1 Z" fill="#a9c8ee" stroke="#1b2636" stroke-width="1"/><circle cx="9.500" cy="8.500" r="3.600" fill="none" stroke="#dfe8f3" stroke-width="1.300"/></svg>
<svg style="left:1073px;top:718.5px" width="18" height="18" viewBox="0 0 12 12"><use href="#at"/></svg>
<svg style="left:1099.3px;top:718.5px" width="18" height="18" viewBox="0 0 12 12"><g opacity=".38"><use href="#at"/></g></svg>
<svg style="left:1123px;top:716px" width="22" height="22" viewBox="0 0 22 22"><g stroke="#fff" stroke-width="1.400"><path d="M11 0 V3.500 M3 3 L5.500 5.500 M19 3 L16.500 5.500 M0 11.500 H3.500 M22 11.500 H18.500 M3 20 L5.500 17.500 M19 20 L16.500 17.500 M11 22.500 V19.500"/></g><g transform="translate(4.500,5.500) scale(1.080)"><use href="#at"/></g></svg>
<svg style="left:1150px;top:717px" width="20" height="20" viewBox="0 0 20 20"><g fill="none"><circle cx="10" cy="10" r="7.300" stroke="#1b2636" stroke-width="5" stroke-dasharray="3.330 2.400" transform="rotate(-12 10 10)"/><circle cx="10" cy="10" r="5" stroke="#1b2636" stroke-width="5.400"/><circle cx="10" cy="10" r="7.300" stroke="#a9c8ee" stroke-width="3.600" stroke-dasharray="2.530 3.200" stroke-dashoffset="-.4" transform="rotate(-12 10 10)"/><circle cx="10" cy="10" r="4.700" stroke="#a9c8ee" stroke-width="4.400"/></g></svg>
<div class="a" style="left:1183.2px;top:714px;width:193px;height:26px;background:#fff"></div>
<div class="t" style="left:1189.3px;letter-spacing:-0.40px;transform:scaleX(0.998);transform-origin:0 0;top:719.5px;color:#6a6a6a">Search animations... (Ctrl+S...</div>
<svg style="left:1354px;top:718px" width="18" height="18" viewBox="0 0 19 19"><use href="#mag"/></svg>
<div class="a" style="left:988.7px;top:819.5px;width:71.5px;height:70.5px;background:#4872a6"></div>
<svg style="left:0;top:0" width="1383" height="933" viewBox="0 0 1383 933"><g transform="translate(0.00,0.00) scale(1) translate(0,0)"><use href="#i_asm"/></g></svg>
<div class="t" style="left:999.5px;letter-spacing:-0.40px;transform:scaleX(0.977);transform-origin:0 0;top:803.2px;color:#eef2f8">Assemble</div>
<svg style="left:0;top:0" width="1383" height="933" viewBox="0 0 1383 933"><g transform="translate(0.00,0.00) scale(1) translate(0,0)"><use href="#i_dasm"/></g></svg>
<div class="t" style="left:1063.7px;letter-spacing:-0.40px;transform:scaleX(0.958);transform-origin:0 0;top:803.2px;color:#eef2f8">Disassemble</div>
<svg style="left:0;top:0" width="1383" height="933" viewBox="0 0 1383 933"><g transform="translate(0.00,0.00) scale(1) translate(0,0)"><use href="#i_dock"/></g></svg>
<div class="t" style="left:1153.5px;letter-spacing:-0.40px;transform:scaleX(0.997);transform-origin:0 0;top:803.2px;color:#eef2f8">Dock</div>
<svg style="left:1228px;top:752px" width="19" height="19" viewBox="0 0 11 11"><use href="#pz"/></svg>
<svg style="left:1227px;top:777px" width="21.5" height="21.5" viewBox="0 0 12 12"><use href="#at"/></svg>
<div class="t" style="left:1206.5px;letter-spacing:-0.17px;top:803.2px;color:#eef2f8">Hold atoms</div>
<svg style="left:1287px;top:753px" width="44" height="46" viewBox="0 0 44 46"><g transform="translate(5.500,6) scale(1.130)"><use href="#np"/></g><g transform="translate(26,1) scale(1.350)"><use href="#at"/></g><g transform="translate(1,27.500) scale(1.350)"><use href="#at"/></g></svg>
<div class="t" style="left:1279.7px;letter-spacing:-0.35px;top:803.2px;color:#eef2f8">Move ato...</div>
<svg style="left:1003px;top:824px" width="46" height="46" viewBox="0 0 46 46"><g transform="translate(6,5) scale(1)"><use href="#np"/></g><g transform="translate(20,0) scale(1.150)"><use href="#at"/></g><g transform="translate(0,20) scale(1.150)"><use href="#at"/></g><path d="M29 27 V44 L44 35.500 Z" fill="#2ecf8a" stroke="#1b2636" stroke-width="1.200" stroke-linejoin="round"/></svg>
<div class="t" style="left:1000.4px;letter-spacing:-0.40px;transform:scaleX(0.991);transform-origin:0 0;top:874px;color:#eef2f8">Play path</div>
<svg style="left:1074px;top:824px" width="46" height="46" viewBox="0 0 46 46"><g transform="translate(6,5) scale(1)"><use href="#np"/></g><g transform="translate(20,0) scale(1.150)"><use href="#at"/></g><g transform="translate(0,20) scale(1.150)"><use href="#at"/></g><path d="M44 27 V44 L29 35.500 Z" fill="#2ecf8a" stroke="#1b2636" stroke-width="1.200" stroke-linejoin="round"/></svg>
<div class="t" style="left:1065.4px;letter-spacing:-0.40px;transform:scaleX(0.980);transform-origin:0 0;top:874px;color:#eef2f8">Play rever...</div>
<svg style="left:0;top:0" width="1383" height="933" viewBox="0 0 1383 933"><g transform="translate(0.00,0.00) scale(1) translate(0,0)"><use href="#i_rock"/></g></svg>
<div class="t" style="left:1153.5px;letter-spacing:-0.40px;transform:scaleX(0.949);transform-origin:0 0;top:874px;color:#eef2f8">Rock</div>
<svg style="left:0;top:0" width="1383" height="933" viewBox="0 0 1383 933"><g transform="translate(0.00,0.00) scale(1) translate(0,0)"><use href="#i_rot"/></g></svg>
<div class="t" style="left:1220.5px;letter-spacing:-0.40px;transform:scaleX(0.973);transform-origin:0 0;top:874px;color:#eef2f8">Rotate</div>
<svg style="left:0;top:0" width="1383" height="933" viewBox="0 0 1383 933"><g transform="translate(0.00,0.00) scale(1) translate(0,0)"><use href="#i_undock"/></g></svg>
<div class="t" style="left:1288.5px;letter-spacing:-0.26px;top:874px;color:#eef2f8">Undock</div>
<svg style="left:1258px;top:906.5px" width="19" height="19" viewBox="0 0 19 19"><use href="#mag"/><path d="M5 7.500 H10 M7.500 5 V10" stroke="#fff" stroke-width="1.400"/></svg>
<svg style="left:1290px;top:906.5px" width="19" height="19" viewBox="0 0 19 19"><use href="#mag"/><path d="M5 7.500 H10" stroke="#fff" stroke-width="1.400"/></svg>
<svg style="left:1321.7px;top:906px" width="19" height="19" viewBox="0 0 19 19"><rect width="19" height="19" fill="#a9c8ee"/><path d="M2 4 H17 M2 7.700 H17 M2 11.400 H17 M2 15.100 H17" stroke="#4a76a9" stroke-width="1.300"/></svg>
<svg style="left:1354px;top:906px" width="19" height="19" viewBox="0 0 19 19"><rect width="19" height="19" fill="#8fb4e4" stroke="#a9c8ee" stroke-width="1"/><g fill="#c4d8f0" stroke="#4a6d9e" stroke-width=".7"><circle cx="6" cy="12.500" r="3.800"/><circle cx="12" cy="6.500" r="3.300"/><circle cx="14" cy="13.500" r="2.800"/></g></svg>
</body>
</html>
